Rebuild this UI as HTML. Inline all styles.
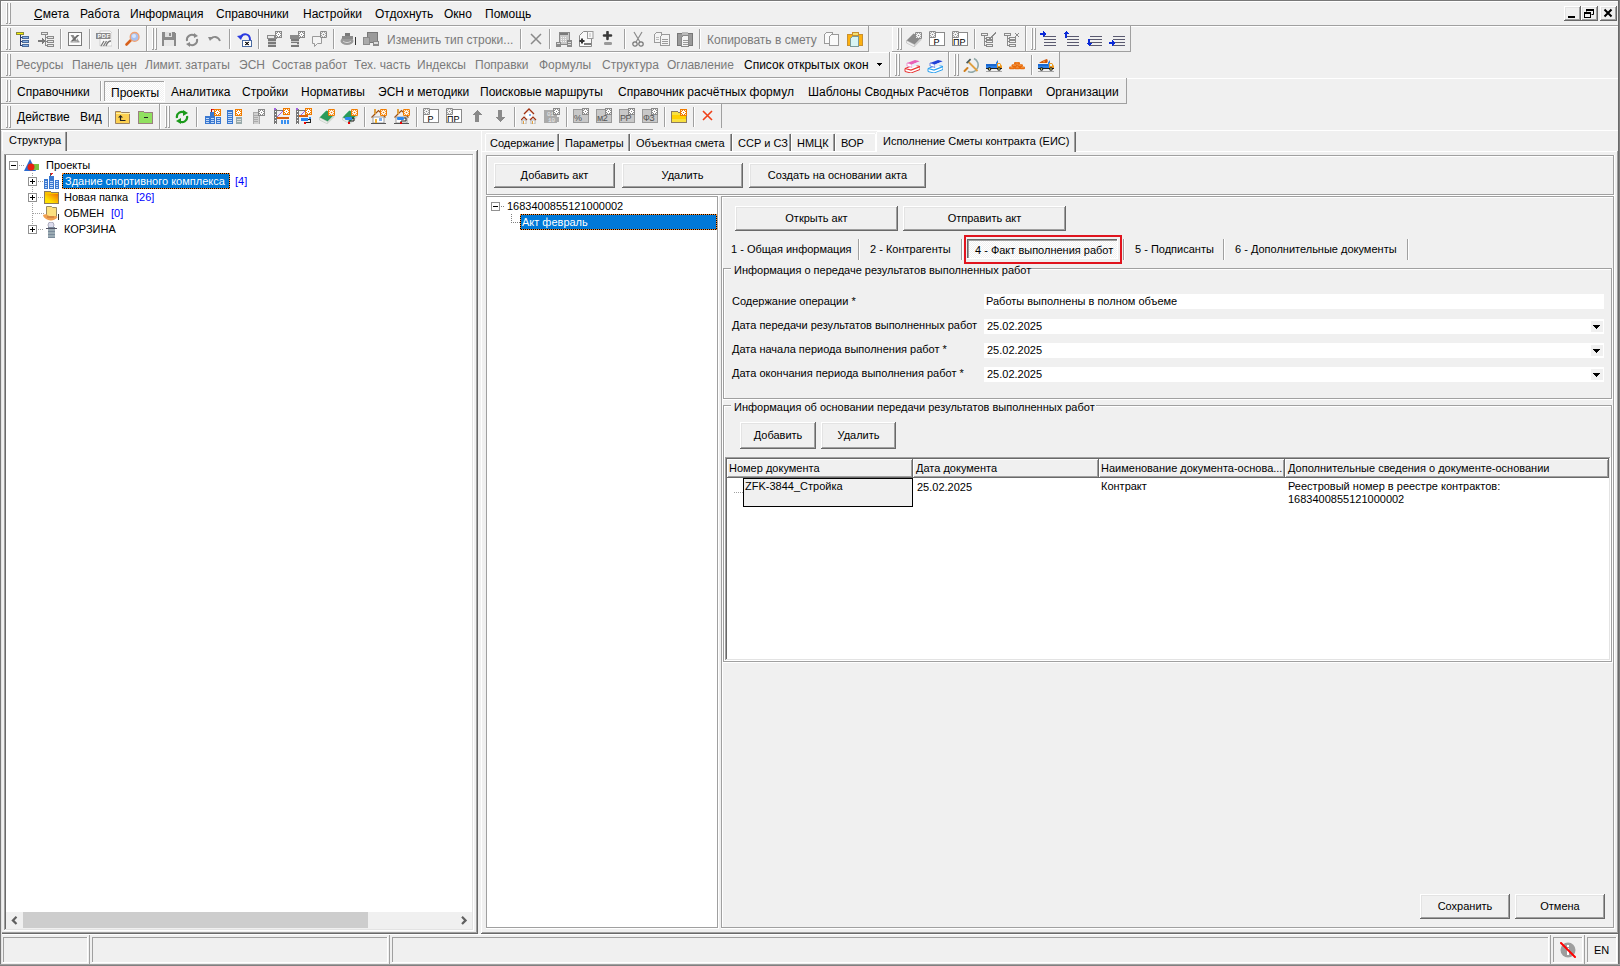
<!DOCTYPE html>
<html><head><meta charset="utf-8"><style>
html,body{margin:0;padding:0;}
body{width:1620px;height:966px;overflow:hidden;background:#f0f0f0;position:relative;font-family:"Liberation Sans",sans-serif;}
body>div{position:absolute;}
.t{font-family:"Liberation Sans",sans-serif;}
svg{position:absolute;}
</style></head><body>
<div style="left:0px;top:0px;width:1620px;height:966px;background:#f0f0f0;"></div>
<div style="left:1px;top:1px;width:1617px;height:1px;background:#ffffff;"></div>
<div style="left:1px;top:1px;width:1px;height:963px;background:#ffffff;"></div>
<div style="left:6px;top:3px;width:1px;height:20px;background:#ffffff;"></div>
<div style="left:7px;top:3px;width:1px;height:21px;background:#a0a0a0;"></div>
<div style="left:9px;top:3px;width:1px;height:20px;background:#ffffff;"></div>
<div style="left:10px;top:3px;width:1px;height:21px;background:#a0a0a0;"></div>
<div style="left:6px;top:23px;width:1px;height:1px;background:#a0a0a0;"></div>
<div style="left:9px;top:23px;width:1px;height:1px;background:#a0a0a0;"></div>
<div class="t" style="left:34px;top:6px;font-size:12px;line-height:16px;color:#000;white-space:nowrap;">Смета</div>
<div class="t" style="left:80px;top:6px;font-size:12px;line-height:16px;color:#000;white-space:nowrap;">Работа</div>
<div class="t" style="left:130px;top:6px;font-size:12px;line-height:16px;color:#000;white-space:nowrap;">Информация</div>
<div class="t" style="left:216px;top:6px;font-size:12px;line-height:16px;color:#000;white-space:nowrap;">Справочники</div>
<div class="t" style="left:303px;top:6px;font-size:12px;line-height:16px;color:#000;white-space:nowrap;">Настройки</div>
<div class="t" style="left:375px;top:6px;font-size:12px;line-height:16px;color:#000;white-space:nowrap;">Отдохнуть</div>
<div class="t" style="left:444px;top:6px;font-size:12px;line-height:16px;color:#000;white-space:nowrap;">Окно</div>
<div class="t" style="left:485px;top:6px;font-size:12px;line-height:16px;color:#000;white-space:nowrap;">Помощь</div>
<div style="left:34px;top:19px;width:8px;height:1px;background:#000;"></div>
<div style="left:1px;top:25px;width:1617px;height:1px;background:#a0a0a0;"></div>
<div style="left:1px;top:26px;width:1617px;height:1px;background:#ffffff;"></div>
<div style="left:1564px;top:6px;width:17px;height:15px;background:#f0f0f0;"></div>
<div style="left:1564px;top:6px;width:17px;height:1px;background:#ffffff;"></div>
<div style="left:1564px;top:6px;width:1px;height:15px;background:#ffffff;"></div>
<div style="left:1564px;top:20px;width:17px;height:1px;background:#696969;"></div>
<div style="left:1580px;top:6px;width:1px;height:15px;background:#696969;"></div>
<div style="left:1565px;top:7px;width:15px;height:1px;background:#e3e3e3;"></div>
<div style="left:1565px;top:7px;width:1px;height:13px;background:#e3e3e3;"></div>
<div style="left:1565px;top:19px;width:15px;height:1px;background:#a0a0a0;"></div>
<div style="left:1579px;top:7px;width:1px;height:13px;background:#a0a0a0;"></div>
<div style="left:1581px;top:6px;width:17px;height:15px;background:#f0f0f0;"></div>
<div style="left:1581px;top:6px;width:17px;height:1px;background:#ffffff;"></div>
<div style="left:1581px;top:6px;width:1px;height:15px;background:#ffffff;"></div>
<div style="left:1581px;top:20px;width:17px;height:1px;background:#696969;"></div>
<div style="left:1597px;top:6px;width:1px;height:15px;background:#696969;"></div>
<div style="left:1582px;top:7px;width:15px;height:1px;background:#e3e3e3;"></div>
<div style="left:1582px;top:7px;width:1px;height:13px;background:#e3e3e3;"></div>
<div style="left:1582px;top:19px;width:15px;height:1px;background:#a0a0a0;"></div>
<div style="left:1596px;top:7px;width:1px;height:13px;background:#a0a0a0;"></div>
<div style="left:1600px;top:6px;width:17px;height:15px;background:#f0f0f0;"></div>
<div style="left:1600px;top:6px;width:17px;height:1px;background:#ffffff;"></div>
<div style="left:1600px;top:6px;width:1px;height:15px;background:#ffffff;"></div>
<div style="left:1600px;top:20px;width:17px;height:1px;background:#696969;"></div>
<div style="left:1616px;top:6px;width:1px;height:15px;background:#696969;"></div>
<div style="left:1601px;top:7px;width:15px;height:1px;background:#e3e3e3;"></div>
<div style="left:1601px;top:7px;width:1px;height:13px;background:#e3e3e3;"></div>
<div style="left:1601px;top:19px;width:15px;height:1px;background:#a0a0a0;"></div>
<div style="left:1615px;top:7px;width:1px;height:13px;background:#a0a0a0;"></div>
<div style="left:1568px;top:16px;width:7px;height:2px;background:#000;"></div>
<svg style="left:1581px;top:6px" width="17" height="15"><path d="M5.5 3.5h7v5h-2 M5.5 3.5v2" fill="none" stroke="#000" stroke-width="1"/><rect x="5" y="3" width="8" height="2" fill="#000"/><rect x="3.5" y="6.5" width="6" height="5" fill="none" stroke="#000"/><rect x="3" y="6" width="7" height="2" fill="#000"/></svg>
<svg style="left:1600px;top:6px" width="17" height="15"><path d="M4.5 3.5l7 7M11.5 3.5l-7 7" stroke="#000" stroke-width="2"/></svg>
<div style="left:1px;top:26px;width:146px;height:1px;background:#ffffff;"></div>
<div style="left:1px;top:26px;width:1px;height:26px;background:#ffffff;"></div>
<div style="left:146px;top:26px;width:1px;height:26px;background:#a0a0a0;"></div>
<div style="left:1px;top:51px;width:146px;height:1px;background:#a0a0a0;"></div>
<div style="left:6px;top:28px;width:1px;height:21px;background:#ffffff;"></div>
<div style="left:7px;top:28px;width:1px;height:22px;background:#a0a0a0;"></div>
<div style="left:9px;top:28px;width:1px;height:21px;background:#ffffff;"></div>
<div style="left:10px;top:28px;width:1px;height:22px;background:#a0a0a0;"></div>
<div style="left:6px;top:49px;width:1px;height:1px;background:#a0a0a0;"></div>
<div style="left:9px;top:49px;width:1px;height:1px;background:#a0a0a0;"></div>
<div style="left:60px;top:29px;width:1px;height:20px;background:#a0a0a0;"></div>
<div style="left:61px;top:29px;width:1px;height:20px;background:#ffffff;"></div>
<div style="left:89px;top:29px;width:1px;height:20px;background:#a0a0a0;"></div>
<div style="left:90px;top:29px;width:1px;height:20px;background:#ffffff;"></div>
<div style="left:118px;top:29px;width:1px;height:20px;background:#a0a0a0;"></div>
<div style="left:119px;top:29px;width:1px;height:20px;background:#ffffff;"></div>
<div style="left:147px;top:26px;width:722px;height:1px;background:#ffffff;"></div>
<div style="left:147px;top:26px;width:1px;height:26px;background:#ffffff;"></div>
<div style="left:868px;top:26px;width:1px;height:26px;background:#a0a0a0;"></div>
<div style="left:147px;top:51px;width:722px;height:1px;background:#a0a0a0;"></div>
<div style="left:152px;top:28px;width:1px;height:21px;background:#ffffff;"></div>
<div style="left:153px;top:28px;width:1px;height:22px;background:#a0a0a0;"></div>
<div style="left:155px;top:28px;width:1px;height:21px;background:#ffffff;"></div>
<div style="left:156px;top:28px;width:1px;height:22px;background:#a0a0a0;"></div>
<div style="left:152px;top:49px;width:1px;height:1px;background:#a0a0a0;"></div>
<div style="left:155px;top:49px;width:1px;height:1px;background:#a0a0a0;"></div>
<div style="left:229px;top:29px;width:1px;height:20px;background:#a0a0a0;"></div>
<div style="left:230px;top:29px;width:1px;height:20px;background:#ffffff;"></div>
<div style="left:258px;top:29px;width:1px;height:20px;background:#a0a0a0;"></div>
<div style="left:259px;top:29px;width:1px;height:20px;background:#ffffff;"></div>
<div style="left:333px;top:29px;width:1px;height:20px;background:#a0a0a0;"></div>
<div style="left:334px;top:29px;width:1px;height:20px;background:#ffffff;"></div>
<div style="left:520px;top:29px;width:1px;height:20px;background:#a0a0a0;"></div>
<div style="left:521px;top:29px;width:1px;height:20px;background:#ffffff;"></div>
<div style="left:549px;top:29px;width:1px;height:20px;background:#a0a0a0;"></div>
<div style="left:550px;top:29px;width:1px;height:20px;background:#ffffff;"></div>
<div style="left:624px;top:29px;width:1px;height:20px;background:#a0a0a0;"></div>
<div style="left:625px;top:29px;width:1px;height:20px;background:#ffffff;"></div>
<div style="left:699px;top:29px;width:1px;height:20px;background:#a0a0a0;"></div>
<div style="left:700px;top:29px;width:1px;height:20px;background:#ffffff;"></div>
<div class="t" style="left:387px;top:32px;font-size:12px;line-height:16px;color:#7a7a7a;white-space:nowrap;">Изменить тип строки...</div>
<div class="t" style="left:707px;top:32px;font-size:12px;line-height:16px;color:#7a7a7a;white-space:nowrap;">Копировать в смету</div>
<div style="left:892px;top:26px;width:134px;height:1px;background:#ffffff;"></div>
<div style="left:892px;top:26px;width:1px;height:26px;background:#ffffff;"></div>
<div style="left:1025px;top:26px;width:1px;height:26px;background:#a0a0a0;"></div>
<div style="left:892px;top:51px;width:134px;height:1px;background:#a0a0a0;"></div>
<div style="left:897px;top:28px;width:1px;height:21px;background:#ffffff;"></div>
<div style="left:898px;top:28px;width:1px;height:22px;background:#a0a0a0;"></div>
<div style="left:900px;top:28px;width:1px;height:21px;background:#ffffff;"></div>
<div style="left:901px;top:28px;width:1px;height:22px;background:#a0a0a0;"></div>
<div style="left:897px;top:49px;width:1px;height:1px;background:#a0a0a0;"></div>
<div style="left:900px;top:49px;width:1px;height:1px;background:#a0a0a0;"></div>
<div style="left:974px;top:29px;width:1px;height:20px;background:#a0a0a0;"></div>
<div style="left:975px;top:29px;width:1px;height:20px;background:#ffffff;"></div>
<div style="left:1026px;top:26px;width:105px;height:1px;background:#ffffff;"></div>
<div style="left:1026px;top:26px;width:1px;height:26px;background:#ffffff;"></div>
<div style="left:1130px;top:26px;width:1px;height:26px;background:#a0a0a0;"></div>
<div style="left:1026px;top:51px;width:105px;height:1px;background:#a0a0a0;"></div>
<div style="left:1031px;top:28px;width:1px;height:21px;background:#ffffff;"></div>
<div style="left:1032px;top:28px;width:1px;height:22px;background:#a0a0a0;"></div>
<div style="left:1034px;top:28px;width:1px;height:21px;background:#ffffff;"></div>
<div style="left:1035px;top:28px;width:1px;height:22px;background:#a0a0a0;"></div>
<div style="left:1031px;top:49px;width:1px;height:1px;background:#a0a0a0;"></div>
<div style="left:1034px;top:49px;width:1px;height:1px;background:#a0a0a0;"></div>
<div style="left:1px;top:52px;width:889px;height:1px;background:#ffffff;"></div>
<div style="left:1px;top:52px;width:1px;height:26px;background:#ffffff;"></div>
<div style="left:889px;top:52px;width:1px;height:26px;background:#a0a0a0;"></div>
<div style="left:1px;top:77px;width:889px;height:1px;background:#a0a0a0;"></div>
<div style="left:6px;top:54px;width:1px;height:21px;background:#ffffff;"></div>
<div style="left:7px;top:54px;width:1px;height:22px;background:#a0a0a0;"></div>
<div style="left:9px;top:54px;width:1px;height:21px;background:#ffffff;"></div>
<div style="left:10px;top:54px;width:1px;height:22px;background:#a0a0a0;"></div>
<div style="left:6px;top:75px;width:1px;height:1px;background:#a0a0a0;"></div>
<div style="left:9px;top:75px;width:1px;height:1px;background:#a0a0a0;"></div>
<div class="t" style="left:16px;top:57px;font-size:12px;line-height:16px;color:#7a7a7a;white-space:nowrap;">Ресурсы</div>
<div class="t" style="left:72px;top:57px;font-size:12px;line-height:16px;color:#7a7a7a;white-space:nowrap;">Панель цен</div>
<div class="t" style="left:145px;top:57px;font-size:12px;line-height:16px;color:#7a7a7a;white-space:nowrap;">Лимит. затраты</div>
<div class="t" style="left:239px;top:57px;font-size:12px;line-height:16px;color:#7a7a7a;white-space:nowrap;">ЭСН</div>
<div class="t" style="left:272px;top:57px;font-size:12px;line-height:16px;color:#7a7a7a;white-space:nowrap;">Состав работ</div>
<div class="t" style="left:354px;top:57px;font-size:12px;line-height:16px;color:#7a7a7a;white-space:nowrap;">Тех. часть</div>
<div class="t" style="left:417px;top:57px;font-size:12px;line-height:16px;color:#7a7a7a;white-space:nowrap;">Индексы</div>
<div class="t" style="left:475px;top:57px;font-size:12px;line-height:16px;color:#7a7a7a;white-space:nowrap;">Поправки</div>
<div class="t" style="left:539px;top:57px;font-size:12px;line-height:16px;color:#7a7a7a;white-space:nowrap;">Формулы</div>
<div class="t" style="left:602px;top:57px;font-size:12px;line-height:16px;color:#7a7a7a;white-space:nowrap;">Структура</div>
<div class="t" style="left:667px;top:57px;font-size:12px;line-height:16px;color:#7a7a7a;white-space:nowrap;">Оглавление</div>
<div class="t" style="left:744px;top:57px;font-size:12px;line-height:16px;color:#000;white-space:nowrap;">Список открытых окон</div>
<div style="left:877px;top:63px;width:5px;height:1px;background:#000;"></div>
<div style="left:878px;top:64px;width:3px;height:1px;background:#000;"></div>
<div style="left:879px;top:65px;width:1px;height:1px;background:#000;"></div>
<div style="left:890px;top:52px;width:59px;height:1px;background:#ffffff;"></div>
<div style="left:890px;top:52px;width:1px;height:26px;background:#ffffff;"></div>
<div style="left:948px;top:52px;width:1px;height:26px;background:#a0a0a0;"></div>
<div style="left:890px;top:77px;width:59px;height:1px;background:#a0a0a0;"></div>
<div style="left:895px;top:54px;width:1px;height:21px;background:#ffffff;"></div>
<div style="left:896px;top:54px;width:1px;height:22px;background:#a0a0a0;"></div>
<div style="left:898px;top:54px;width:1px;height:21px;background:#ffffff;"></div>
<div style="left:899px;top:54px;width:1px;height:22px;background:#a0a0a0;"></div>
<div style="left:895px;top:75px;width:1px;height:1px;background:#a0a0a0;"></div>
<div style="left:898px;top:75px;width:1px;height:1px;background:#a0a0a0;"></div>
<div style="left:949px;top:52px;width:111px;height:1px;background:#ffffff;"></div>
<div style="left:949px;top:52px;width:1px;height:26px;background:#ffffff;"></div>
<div style="left:1059px;top:52px;width:1px;height:26px;background:#a0a0a0;"></div>
<div style="left:949px;top:77px;width:111px;height:1px;background:#a0a0a0;"></div>
<div style="left:954px;top:54px;width:1px;height:21px;background:#ffffff;"></div>
<div style="left:955px;top:54px;width:1px;height:22px;background:#a0a0a0;"></div>
<div style="left:957px;top:54px;width:1px;height:21px;background:#ffffff;"></div>
<div style="left:958px;top:54px;width:1px;height:22px;background:#a0a0a0;"></div>
<div style="left:954px;top:75px;width:1px;height:1px;background:#a0a0a0;"></div>
<div style="left:957px;top:75px;width:1px;height:1px;background:#a0a0a0;"></div>
<div style="left:1031px;top:55px;width:1px;height:20px;background:#a0a0a0;"></div>
<div style="left:1032px;top:55px;width:1px;height:20px;background:#ffffff;"></div>
<div style="left:1060px;top:78px;width:558px;height:1px;background:#ffffff;"></div>
<div style="left:1px;top:78px;width:1126px;height:1px;background:#ffffff;"></div>
<div style="left:1px;top:78px;width:1px;height:26px;background:#ffffff;"></div>
<div style="left:1126px;top:78px;width:1px;height:26px;background:#a0a0a0;"></div>
<div style="left:1px;top:103px;width:1126px;height:1px;background:#a0a0a0;"></div>
<div style="left:6px;top:80px;width:1px;height:21px;background:#ffffff;"></div>
<div style="left:7px;top:80px;width:1px;height:22px;background:#a0a0a0;"></div>
<div style="left:9px;top:80px;width:1px;height:21px;background:#ffffff;"></div>
<div style="left:10px;top:80px;width:1px;height:22px;background:#a0a0a0;"></div>
<div style="left:6px;top:101px;width:1px;height:1px;background:#a0a0a0;"></div>
<div style="left:9px;top:101px;width:1px;height:1px;background:#a0a0a0;"></div>
<div class="t" style="left:17px;top:84px;font-size:12px;line-height:16px;color:#000;white-space:nowrap;">Справочники</div>
<div style="left:100px;top:81px;width:1px;height:20px;background:#a0a0a0;"></div>
<div style="left:101px;top:81px;width:1px;height:20px;background:#ffffff;"></div>
<div style="left:104px;top:81px;width:61px;height:21px;background:repeating-conic-gradient(#ffffff 0 25%, #f0f0f0 0 50%) 0 0/2px 2px;"></div>
<div style="left:104px;top:81px;width:61px;height:1px;background:#a0a0a0;"></div>
<div style="left:104px;top:81px;width:1px;height:21px;background:#a0a0a0;"></div>
<div style="left:104px;top:101px;width:61px;height:1px;background:#ffffff;"></div>
<div style="left:164px;top:81px;width:1px;height:21px;background:#ffffff;"></div>
<div class="t" style="left:111px;top:85px;font-size:12px;line-height:16px;color:#000;white-space:nowrap;">Проекты</div>
<div class="t" style="left:171px;top:84px;font-size:12px;line-height:16px;color:#000;white-space:nowrap;">Аналитика</div>
<div class="t" style="left:242px;top:84px;font-size:12px;line-height:16px;color:#000;white-space:nowrap;">Стройки</div>
<div class="t" style="left:301px;top:84px;font-size:12px;line-height:16px;color:#000;white-space:nowrap;">Нормативы</div>
<div class="t" style="left:378px;top:84px;font-size:12px;line-height:16px;color:#000;white-space:nowrap;">ЭСН и методики</div>
<div class="t" style="left:480px;top:84px;font-size:12px;line-height:16px;color:#000;white-space:nowrap;">Поисковые маршруты</div>
<div class="t" style="left:618px;top:84px;font-size:12px;line-height:16px;color:#000;white-space:nowrap;">Справочник расчётных формул</div>
<div class="t" style="left:808px;top:84px;font-size:12px;line-height:16px;color:#000;white-space:nowrap;">Шаблоны Сводных Расчётов</div>
<div class="t" style="left:979px;top:84px;font-size:12px;line-height:16px;color:#000;white-space:nowrap;">Поправки</div>
<div class="t" style="left:1046px;top:84px;font-size:12px;line-height:16px;color:#000;white-space:nowrap;">Организации</div>
<div style="left:1px;top:104px;width:720px;height:1px;background:#ffffff;"></div>
<div style="left:6px;top:106px;width:1px;height:21px;background:#ffffff;"></div>
<div style="left:7px;top:106px;width:1px;height:22px;background:#a0a0a0;"></div>
<div style="left:9px;top:106px;width:1px;height:21px;background:#ffffff;"></div>
<div style="left:10px;top:106px;width:1px;height:22px;background:#a0a0a0;"></div>
<div style="left:6px;top:127px;width:1px;height:1px;background:#a0a0a0;"></div>
<div style="left:9px;top:127px;width:1px;height:1px;background:#a0a0a0;"></div>
<div class="t" style="left:17px;top:109px;font-size:12px;line-height:16px;color:#000;white-space:nowrap;">Действие</div>
<div class="t" style="left:80px;top:109px;font-size:12px;line-height:16px;color:#000;white-space:nowrap;">Вид</div>
<div style="left:108px;top:107px;width:1px;height:20px;background:#a0a0a0;"></div>
<div style="left:109px;top:107px;width:1px;height:20px;background:#ffffff;"></div>
<div style="left:159px;top:104px;width:1px;height:25px;background:#a0a0a0;"></div>
<div style="left:160px;top:104px;width:1px;height:25px;background:#ffffff;"></div>
<div style="left:165px;top:106px;width:1px;height:21px;background:#ffffff;"></div>
<div style="left:166px;top:106px;width:1px;height:22px;background:#a0a0a0;"></div>
<div style="left:168px;top:106px;width:1px;height:21px;background:#ffffff;"></div>
<div style="left:169px;top:106px;width:1px;height:22px;background:#a0a0a0;"></div>
<div style="left:165px;top:127px;width:1px;height:1px;background:#a0a0a0;"></div>
<div style="left:168px;top:127px;width:1px;height:1px;background:#a0a0a0;"></div>
<div style="left:196px;top:107px;width:1px;height:20px;background:#a0a0a0;"></div>
<div style="left:197px;top:107px;width:1px;height:20px;background:#ffffff;"></div>
<div style="left:364px;top:107px;width:1px;height:20px;background:#a0a0a0;"></div>
<div style="left:365px;top:107px;width:1px;height:20px;background:#ffffff;"></div>
<div style="left:416px;top:107px;width:1px;height:20px;background:#a0a0a0;"></div>
<div style="left:417px;top:107px;width:1px;height:20px;background:#ffffff;"></div>
<div style="left:514px;top:107px;width:1px;height:20px;background:#a0a0a0;"></div>
<div style="left:515px;top:107px;width:1px;height:20px;background:#ffffff;"></div>
<div style="left:566px;top:107px;width:1px;height:20px;background:#a0a0a0;"></div>
<div style="left:567px;top:107px;width:1px;height:20px;background:#ffffff;"></div>
<div style="left:664px;top:107px;width:1px;height:20px;background:#a0a0a0;"></div>
<div style="left:665px;top:107px;width:1px;height:20px;background:#ffffff;"></div>
<div style="left:693px;top:107px;width:1px;height:20px;background:#a0a0a0;"></div>
<div style="left:694px;top:107px;width:1px;height:20px;background:#ffffff;"></div>
<div style="left:721px;top:104px;width:1px;height:24px;background:#a0a0a0;"></div>
<div style="left:1px;top:129px;width:652px;height:1px;background:#a0a0a0;"></div>
<div style="left:1px;top:130px;width:1617px;height:1px;background:#ffffff;"></div>
<div style="left:2px;top:131px;width:63px;height:1px;background:#ffffff;"></div>
<div style="left:2px;top:131px;width:1px;height:20px;background:#ffffff;"></div>
<div style="left:65px;top:132px;width:1px;height:19px;background:#a0a0a0;"></div>
<div style="left:66px;top:132px;width:1px;height:19px;background:#696969;"></div>
<div class="t" style="left:9px;top:133px;font-size:11px;line-height:15px;color:#000;white-space:nowrap;">Структура</div>
<div style="left:67px;top:150px;width:411px;height:1px;background:#ffffff;"></div>
<div style="left:476px;top:151px;width:1px;height:782px;background:#a0a0a0;"></div>
<div style="left:477px;top:150px;width:1px;height:784px;background:#696969;"></div>
<div style="left:2px;top:932px;width:475px;height:1px;background:#a0a0a0;"></div>
<div style="left:1px;top:933px;width:477px;height:1px;background:#696969;"></div>
<div style="left:4px;top:154px;width:470px;height:777px;background:#ffffff;"></div>
<div style="left:4px;top:154px;width:470px;height:1px;background:#a0a0a0;"></div>
<div style="left:4px;top:154px;width:1px;height:777px;background:#a0a0a0;"></div>
<div style="left:5px;top:155px;width:1px;height:775px;background:#696969;"></div>
<div style="left:5px;top:929px;width:468px;height:1px;background:#e3e3e3;"></div>
<div style="left:472px;top:155px;width:1px;height:775px;background:#e3e3e3;"></div>
<div style="left:4px;top:930px;width:470px;height:1px;background:#ffffff;"></div>
<div style="left:473px;top:154px;width:1px;height:777px;background:#ffffff;"></div>
<div style="left:6px;top:912px;width:466px;height:17px;background:#f0f0f0;"></div>
<div style="left:23px;top:912px;width:345px;height:16px;background:#cdcdcd;"></div>
<svg style="left:6px;top:912px" width="16" height="17"><path d="M10.5 4.8l-3.6 3.6 3.6 3.6" fill="none" stroke="#606060" stroke-width="2.2"/></svg>
<svg style="left:456px;top:912px" width="16" height="17"><path d="M6 4.8l3.6 3.6-3.6 3.6" fill="none" stroke="#606060" stroke-width="2.2"/></svg>
<div style="left:9px;top:161px;width:9px;height:9px;background:#ffffff;box-sizing:border-box;border:1px solid #919191;"></div>
<div style="left:11px;top:165px;width:5px;height:1px;background:#000;"></div>
<div style="left:19px;top:165px;width:1px;height:1px;background:#a0a0a0;"></div>
<div style="left:21px;top:165px;width:1px;height:1px;background:#a0a0a0;"></div>
<div style="left:23px;top:165px;width:1px;height:1px;background:#a0a0a0;"></div>
<div class="t" style="left:46px;top:158px;font-size:11px;line-height:15px;color:#000;white-space:nowrap;">Проекты</div>
<div style="left:32px;top:173px;width:1px;height:1px;background:#a0a0a0;"></div>
<div style="left:32px;top:175px;width:1px;height:1px;background:#a0a0a0;"></div>
<div style="left:32px;top:177px;width:1px;height:1px;background:#a0a0a0;"></div>
<div style="left:32px;top:179px;width:1px;height:1px;background:#a0a0a0;"></div>
<div style="left:32px;top:181px;width:1px;height:1px;background:#a0a0a0;"></div>
<div style="left:32px;top:183px;width:1px;height:1px;background:#a0a0a0;"></div>
<div style="left:32px;top:185px;width:1px;height:1px;background:#a0a0a0;"></div>
<div style="left:32px;top:187px;width:1px;height:1px;background:#a0a0a0;"></div>
<div style="left:32px;top:189px;width:1px;height:1px;background:#a0a0a0;"></div>
<div style="left:32px;top:191px;width:1px;height:1px;background:#a0a0a0;"></div>
<div style="left:32px;top:193px;width:1px;height:1px;background:#a0a0a0;"></div>
<div style="left:32px;top:195px;width:1px;height:1px;background:#a0a0a0;"></div>
<div style="left:32px;top:197px;width:1px;height:1px;background:#a0a0a0;"></div>
<div style="left:32px;top:199px;width:1px;height:1px;background:#a0a0a0;"></div>
<div style="left:32px;top:201px;width:1px;height:1px;background:#a0a0a0;"></div>
<div style="left:32px;top:203px;width:1px;height:1px;background:#a0a0a0;"></div>
<div style="left:32px;top:205px;width:1px;height:1px;background:#a0a0a0;"></div>
<div style="left:32px;top:207px;width:1px;height:1px;background:#a0a0a0;"></div>
<div style="left:32px;top:209px;width:1px;height:1px;background:#a0a0a0;"></div>
<div style="left:32px;top:211px;width:1px;height:1px;background:#a0a0a0;"></div>
<div style="left:32px;top:213px;width:1px;height:1px;background:#a0a0a0;"></div>
<div style="left:32px;top:215px;width:1px;height:1px;background:#a0a0a0;"></div>
<div style="left:32px;top:217px;width:1px;height:1px;background:#a0a0a0;"></div>
<div style="left:32px;top:219px;width:1px;height:1px;background:#a0a0a0;"></div>
<div style="left:32px;top:221px;width:1px;height:1px;background:#a0a0a0;"></div>
<div style="left:32px;top:223px;width:1px;height:1px;background:#a0a0a0;"></div>
<div style="left:32px;top:225px;width:1px;height:1px;background:#a0a0a0;"></div>
<div style="left:32px;top:227px;width:1px;height:1px;background:#a0a0a0;"></div>
<div style="left:32px;top:229px;width:1px;height:1px;background:#a0a0a0;"></div>
<div style="left:38px;top:181px;width:1px;height:1px;background:#a0a0a0;"></div>
<div style="left:40px;top:181px;width:1px;height:1px;background:#a0a0a0;"></div>
<div style="left:42px;top:181px;width:1px;height:1px;background:#a0a0a0;"></div>
<div style="left:38px;top:197px;width:1px;height:1px;background:#a0a0a0;"></div>
<div style="left:40px;top:197px;width:1px;height:1px;background:#a0a0a0;"></div>
<div style="left:42px;top:197px;width:1px;height:1px;background:#a0a0a0;"></div>
<div style="left:38px;top:229px;width:1px;height:1px;background:#a0a0a0;"></div>
<div style="left:40px;top:229px;width:1px;height:1px;background:#a0a0a0;"></div>
<div style="left:42px;top:229px;width:1px;height:1px;background:#a0a0a0;"></div>
<div style="left:33px;top:213px;width:1px;height:1px;background:#a0a0a0;"></div>
<div style="left:35px;top:213px;width:1px;height:1px;background:#a0a0a0;"></div>
<div style="left:37px;top:213px;width:1px;height:1px;background:#a0a0a0;"></div>
<div style="left:39px;top:213px;width:1px;height:1px;background:#a0a0a0;"></div>
<div style="left:41px;top:213px;width:1px;height:1px;background:#a0a0a0;"></div>
<div style="left:43px;top:213px;width:1px;height:1px;background:#a0a0a0;"></div>
<div style="left:62px;top:173px;width:168px;height:16px;background:#000;"></div>
<div style="left:62px;top:173px;width:168px;height:16px;background:#0078d7;box-sizing:border-box;border:1px dotted #ff8c28;background-clip:padding-box;"></div>
<div class="t" style="left:65px;top:174px;font-size:11px;line-height:15px;color:#fff;white-space:nowrap;">Здание спортивного комплекса</div>
<div class="t" style="left:235px;top:174px;font-size:11px;line-height:15px;color:#0000ff;white-space:nowrap;">[4]</div>
<div class="t" style="left:64px;top:190px;font-size:11px;line-height:15px;color:#000;white-space:nowrap;">Новая папка</div>
<div class="t" style="left:136px;top:190px;font-size:11px;line-height:15px;color:#0000ff;white-space:nowrap;">[26]</div>
<div class="t" style="left:64px;top:206px;font-size:11px;line-height:15px;color:#000;white-space:nowrap;">ОБМЕН</div>
<div class="t" style="left:111px;top:206px;font-size:11px;line-height:15px;color:#0000ff;white-space:nowrap;">[0]</div>
<div class="t" style="left:64px;top:222px;font-size:11px;line-height:15px;color:#000;white-space:nowrap;">КОРЗИНА</div>
<div style="left:28px;top:177px;width:9px;height:9px;background:#ffffff;box-sizing:border-box;border:1px solid #919191;"></div>
<div style="left:30px;top:181px;width:5px;height:1px;background:#000;"></div>
<div style="left:32px;top:179px;width:1px;height:5px;background:#000;"></div>
<div style="left:28px;top:193px;width:9px;height:9px;background:#ffffff;box-sizing:border-box;border:1px solid #919191;"></div>
<div style="left:30px;top:197px;width:5px;height:1px;background:#000;"></div>
<div style="left:32px;top:195px;width:1px;height:5px;background:#000;"></div>
<div style="left:28px;top:225px;width:9px;height:9px;background:#ffffff;box-sizing:border-box;border:1px solid #919191;"></div>
<div style="left:30px;top:229px;width:5px;height:1px;background:#000;"></div>
<div style="left:32px;top:227px;width:1px;height:5px;background:#000;"></div>
<div style="left:481px;top:130px;width:1px;height:804px;background:#ffffff;"></div>
<div style="left:486px;top:133px;width:72px;height:1px;background:#ffffff;"></div>
<div style="left:485px;top:134px;width:1px;height:17px;background:#ffffff;"></div>
<div style="left:557px;top:134px;width:1px;height:17px;background:#a0a0a0;"></div>
<div style="left:558px;top:134px;width:1px;height:17px;background:#696969;"></div>
<div class="t" style="left:490px;top:136px;font-size:11px;line-height:15px;color:#000;white-space:nowrap;">Содержание</div>
<div style="left:560px;top:133px;width:69px;height:1px;background:#ffffff;"></div>
<div style="left:559px;top:134px;width:1px;height:17px;background:#ffffff;"></div>
<div style="left:628px;top:134px;width:1px;height:17px;background:#a0a0a0;"></div>
<div style="left:629px;top:134px;width:1px;height:17px;background:#696969;"></div>
<div class="t" style="left:565px;top:136px;font-size:11px;line-height:15px;color:#000;white-space:nowrap;">Параметры</div>
<div style="left:631px;top:133px;width:100px;height:1px;background:#ffffff;"></div>
<div style="left:630px;top:134px;width:1px;height:17px;background:#ffffff;"></div>
<div style="left:730px;top:134px;width:1px;height:17px;background:#a0a0a0;"></div>
<div style="left:731px;top:134px;width:1px;height:17px;background:#696969;"></div>
<div class="t" style="left:636px;top:136px;font-size:11px;line-height:15px;color:#000;white-space:nowrap;">Объектная смета</div>
<div style="left:733px;top:133px;width:57px;height:1px;background:#ffffff;"></div>
<div style="left:732px;top:134px;width:1px;height:17px;background:#ffffff;"></div>
<div style="left:789px;top:134px;width:1px;height:17px;background:#a0a0a0;"></div>
<div style="left:790px;top:134px;width:1px;height:17px;background:#696969;"></div>
<div class="t" style="left:738px;top:136px;font-size:11px;line-height:15px;color:#000;white-space:nowrap;">ССР и СЗ</div>
<div style="left:792px;top:133px;width:42px;height:1px;background:#ffffff;"></div>
<div style="left:791px;top:134px;width:1px;height:17px;background:#ffffff;"></div>
<div style="left:833px;top:134px;width:1px;height:17px;background:#a0a0a0;"></div>
<div style="left:834px;top:134px;width:1px;height:17px;background:#696969;"></div>
<div class="t" style="left:797px;top:136px;font-size:11px;line-height:15px;color:#000;white-space:nowrap;">НМЦК</div>
<div style="left:836px;top:133px;width:39px;height:1px;background:#ffffff;"></div>
<div style="left:835px;top:134px;width:1px;height:17px;background:#ffffff;"></div>
<div class="t" style="left:841px;top:136px;font-size:11px;line-height:15px;color:#000;white-space:nowrap;">ВОР</div>
<div style="left:875px;top:134px;width:1px;height:17px;background:#ffffff;"></div>
<div style="left:877px;top:131px;width:197px;height:1px;background:#ffffff;"></div>
<div style="left:876px;top:132px;width:1px;height:20px;background:#ffffff;"></div>
<div style="left:1074px;top:132px;width:1px;height:20px;background:#a0a0a0;"></div>
<div style="left:1075px;top:132px;width:1px;height:20px;background:#696969;"></div>
<div class="t" style="left:883px;top:134px;font-size:11px;line-height:15px;color:#000;white-space:nowrap;">Исполнение Сметы контракта (ЕИС)</div>
<div style="left:482px;top:151px;width:394px;height:1px;background:#ffffff;"></div>
<div style="left:1076px;top:151px;width:542px;height:1px;background:#ffffff;"></div>
<div style="left:1617px;top:151px;width:1px;height:782px;background:#696969;"></div>
<div style="left:482px;top:932px;width:1136px;height:1px;background:#a0a0a0;"></div>
<div style="left:481px;top:933px;width:1137px;height:1px;background:#696969;"></div>
<div style="left:486px;top:155px;width:1129px;height:1px;background:#a0a0a0;"></div>
<div style="left:486px;top:155px;width:1px;height:41px;background:#a0a0a0;"></div>
<div style="left:486px;top:195px;width:1129px;height:1px;background:#ffffff;"></div>
<div style="left:1614px;top:155px;width:1px;height:41px;background:#ffffff;"></div>
<div style="left:487px;top:156px;width:1127px;height:1px;background:#ffffff;"></div>
<div style="left:487px;top:156px;width:1px;height:39px;background:#ffffff;"></div>
<div style="left:487px;top:194px;width:1127px;height:1px;background:#a0a0a0;"></div>
<div style="left:1613px;top:156px;width:1px;height:39px;background:#a0a0a0;"></div>
<div style="left:494px;top:163px;width:121px;height:25px;background:#f0f0f0;"></div>
<div style="left:494px;top:163px;width:121px;height:1px;background:#ffffff;"></div>
<div style="left:494px;top:163px;width:1px;height:25px;background:#ffffff;"></div>
<div style="left:494px;top:187px;width:121px;height:1px;background:#696969;"></div>
<div style="left:614px;top:163px;width:1px;height:25px;background:#696969;"></div>
<div style="left:495px;top:164px;width:119px;height:1px;background:#e3e3e3;"></div>
<div style="left:495px;top:164px;width:1px;height:23px;background:#e3e3e3;"></div>
<div style="left:495px;top:186px;width:119px;height:1px;background:#a0a0a0;"></div>
<div style="left:613px;top:164px;width:1px;height:23px;background:#a0a0a0;"></div>
<div class="t" style="left:494px;width:121px;text-align:center;top:168px;font-size:11px;line-height:15px;">Добавить акт</div>
<div style="left:622px;top:163px;width:121px;height:25px;background:#f0f0f0;"></div>
<div style="left:622px;top:163px;width:121px;height:1px;background:#ffffff;"></div>
<div style="left:622px;top:163px;width:1px;height:25px;background:#ffffff;"></div>
<div style="left:622px;top:187px;width:121px;height:1px;background:#696969;"></div>
<div style="left:742px;top:163px;width:1px;height:25px;background:#696969;"></div>
<div style="left:623px;top:164px;width:119px;height:1px;background:#e3e3e3;"></div>
<div style="left:623px;top:164px;width:1px;height:23px;background:#e3e3e3;"></div>
<div style="left:623px;top:186px;width:119px;height:1px;background:#a0a0a0;"></div>
<div style="left:741px;top:164px;width:1px;height:23px;background:#a0a0a0;"></div>
<div class="t" style="left:622px;width:121px;text-align:center;top:168px;font-size:11px;line-height:15px;">Удалить</div>
<div style="left:749px;top:163px;width:177px;height:25px;background:#f0f0f0;"></div>
<div style="left:749px;top:163px;width:177px;height:1px;background:#ffffff;"></div>
<div style="left:749px;top:163px;width:1px;height:25px;background:#ffffff;"></div>
<div style="left:749px;top:187px;width:177px;height:1px;background:#696969;"></div>
<div style="left:925px;top:163px;width:1px;height:25px;background:#696969;"></div>
<div style="left:750px;top:164px;width:175px;height:1px;background:#e3e3e3;"></div>
<div style="left:750px;top:164px;width:1px;height:23px;background:#e3e3e3;"></div>
<div style="left:750px;top:186px;width:175px;height:1px;background:#a0a0a0;"></div>
<div style="left:924px;top:164px;width:1px;height:23px;background:#a0a0a0;"></div>
<div class="t" style="left:749px;width:177px;text-align:center;top:168px;font-size:11px;line-height:15px;">Создать на основании акта</div>
<div style="left:486px;top:196px;width:233px;height:1px;background:#a0a0a0;"></div>
<div style="left:486px;top:196px;width:1px;height:733px;background:#a0a0a0;"></div>
<div style="left:486px;top:928px;width:233px;height:1px;background:#ffffff;"></div>
<div style="left:718px;top:196px;width:1px;height:733px;background:#ffffff;"></div>
<div style="left:487px;top:197px;width:231px;height:1px;background:#ffffff;"></div>
<div style="left:487px;top:197px;width:1px;height:731px;background:#ffffff;"></div>
<div style="left:487px;top:927px;width:231px;height:1px;background:#a0a0a0;"></div>
<div style="left:717px;top:197px;width:1px;height:731px;background:#a0a0a0;"></div>
<div style="left:487px;top:197px;width:230px;height:730px;background:#ffffff;"></div>
<div style="left:491px;top:202px;width:9px;height:9px;background:#ffffff;box-sizing:border-box;border:1px solid #919191;"></div>
<div style="left:493px;top:206px;width:5px;height:1px;background:#000;"></div>
<div style="left:501px;top:206px;width:1px;height:1px;background:#808080;"></div>
<div style="left:503px;top:206px;width:1px;height:1px;background:#808080;"></div>
<div class="t" style="left:507px;top:199px;font-size:11px;line-height:15px;color:#000;white-space:nowrap;">1683400855121000002</div>
<div style="left:511px;top:214px;width:1px;height:1px;background:#808080;"></div>
<div style="left:511px;top:216px;width:1px;height:1px;background:#808080;"></div>
<div style="left:511px;top:218px;width:1px;height:1px;background:#808080;"></div>
<div style="left:511px;top:220px;width:1px;height:1px;background:#808080;"></div>
<div style="left:511px;top:222px;width:1px;height:1px;background:#808080;"></div>
<div style="left:513px;top:222px;width:1px;height:1px;background:#808080;"></div>
<div style="left:515px;top:222px;width:1px;height:1px;background:#808080;"></div>
<div style="left:517px;top:222px;width:1px;height:1px;background:#808080;"></div>
<div style="left:519px;top:222px;width:1px;height:1px;background:#808080;"></div>
<div style="left:520px;top:214px;width:197px;height:16px;background:#000;"></div>
<div style="left:520px;top:214px;width:197px;height:16px;background:#0078d7;box-sizing:border-box;border:1px dotted #ff8c28;background-clip:padding-box;"></div>
<div class="t" style="left:522px;top:215px;font-size:11px;line-height:15px;color:#fff;white-space:nowrap;">Акт февраль</div>
<div style="left:721px;top:196px;width:894px;height:1px;background:#a0a0a0;"></div>
<div style="left:721px;top:196px;width:1px;height:733px;background:#a0a0a0;"></div>
<div style="left:721px;top:928px;width:894px;height:1px;background:#ffffff;"></div>
<div style="left:1614px;top:196px;width:1px;height:733px;background:#ffffff;"></div>
<div style="left:722px;top:197px;width:892px;height:1px;background:#ffffff;"></div>
<div style="left:722px;top:197px;width:1px;height:731px;background:#ffffff;"></div>
<div style="left:722px;top:927px;width:892px;height:1px;background:#a0a0a0;"></div>
<div style="left:1613px;top:197px;width:1px;height:731px;background:#a0a0a0;"></div>
<div style="left:735px;top:206px;width:163px;height:25px;background:#f0f0f0;"></div>
<div style="left:735px;top:206px;width:163px;height:1px;background:#ffffff;"></div>
<div style="left:735px;top:206px;width:1px;height:25px;background:#ffffff;"></div>
<div style="left:735px;top:230px;width:163px;height:1px;background:#696969;"></div>
<div style="left:897px;top:206px;width:1px;height:25px;background:#696969;"></div>
<div style="left:736px;top:207px;width:161px;height:1px;background:#e3e3e3;"></div>
<div style="left:736px;top:207px;width:1px;height:23px;background:#e3e3e3;"></div>
<div style="left:736px;top:229px;width:161px;height:1px;background:#a0a0a0;"></div>
<div style="left:896px;top:207px;width:1px;height:23px;background:#a0a0a0;"></div>
<div class="t" style="left:735px;width:163px;text-align:center;top:211px;font-size:11px;line-height:15px;">Открыть акт</div>
<div style="left:903px;top:206px;width:163px;height:25px;background:#f0f0f0;"></div>
<div style="left:903px;top:206px;width:163px;height:1px;background:#ffffff;"></div>
<div style="left:903px;top:206px;width:1px;height:25px;background:#ffffff;"></div>
<div style="left:903px;top:230px;width:163px;height:1px;background:#696969;"></div>
<div style="left:1065px;top:206px;width:1px;height:25px;background:#696969;"></div>
<div style="left:904px;top:207px;width:161px;height:1px;background:#e3e3e3;"></div>
<div style="left:904px;top:207px;width:1px;height:23px;background:#e3e3e3;"></div>
<div style="left:904px;top:229px;width:161px;height:1px;background:#a0a0a0;"></div>
<div style="left:1064px;top:207px;width:1px;height:23px;background:#a0a0a0;"></div>
<div class="t" style="left:903px;width:163px;text-align:center;top:211px;font-size:11px;line-height:15px;">Отправить акт</div>
<div class="t" style="left:731px;top:242px;font-size:11px;line-height:15px;color:#000;white-space:nowrap;">1 - Общая информация</div>
<div style="left:858px;top:239px;width:1px;height:21px;background:#a0a0a0;"></div>
<div style="left:859px;top:239px;width:1px;height:21px;background:#ffffff;"></div>
<div class="t" style="left:870px;top:242px;font-size:11px;line-height:15px;color:#000;white-space:nowrap;">2 - Контрагенты</div>
<div style="left:961px;top:239px;width:1px;height:21px;background:#a0a0a0;"></div>
<div style="left:962px;top:239px;width:1px;height:21px;background:#ffffff;"></div>
<div style="left:964px;top:235px;width:158px;height:29px;background:transparent;box-sizing:border-box;border:2px solid #e0141e;"></div>
<div style="left:967px;top:239px;width:151px;height:20px;background:repeating-conic-gradient(#ffffff 0 25%, #f0f0f0 0 50%) 0 0/2px 2px;"></div>
<div style="left:967px;top:239px;width:151px;height:1px;background:#696969;"></div>
<div style="left:967px;top:239px;width:1px;height:20px;background:#696969;"></div>
<div style="left:968px;top:240px;width:149px;height:1px;background:#a0a0a0;"></div>
<div style="left:968px;top:240px;width:1px;height:18px;background:#a0a0a0;"></div>
<div style="left:967px;top:258px;width:151px;height:1px;background:#ffffff;"></div>
<div style="left:1117px;top:239px;width:1px;height:20px;background:#ffffff;"></div>
<div class="t" style="left:975px;top:243px;font-size:11px;line-height:15px;color:#000;white-space:nowrap;">4 - Факт выполнения работ</div>
<div style="left:1123px;top:239px;width:1px;height:21px;background:#a0a0a0;"></div>
<div style="left:1124px;top:239px;width:1px;height:21px;background:#ffffff;"></div>
<div class="t" style="left:1135px;top:242px;font-size:11px;line-height:15px;color:#000;white-space:nowrap;">5 - Подписанты</div>
<div style="left:1223px;top:239px;width:1px;height:21px;background:#a0a0a0;"></div>
<div style="left:1224px;top:239px;width:1px;height:21px;background:#ffffff;"></div>
<div class="t" style="left:1235px;top:242px;font-size:11px;line-height:15px;color:#000;white-space:nowrap;">6 - Дополнительные документы</div>
<div style="left:1407px;top:239px;width:1px;height:21px;background:#a0a0a0;"></div>
<div style="left:1408px;top:239px;width:1px;height:21px;background:#ffffff;"></div>
<div style="left:723px;top:268px;width:890px;height:1px;background:#a0a0a0;"></div>
<div style="left:723px;top:268px;width:1px;height:132px;background:#a0a0a0;"></div>
<div style="left:723px;top:399px;width:890px;height:1px;background:#ffffff;"></div>
<div style="left:1612px;top:268px;width:1px;height:132px;background:#ffffff;"></div>
<div style="left:724px;top:269px;width:888px;height:1px;background:#ffffff;"></div>
<div style="left:724px;top:269px;width:1px;height:130px;background:#ffffff;"></div>
<div style="left:724px;top:398px;width:888px;height:1px;background:#a0a0a0;"></div>
<div style="left:1611px;top:269px;width:1px;height:130px;background:#a0a0a0;"></div>
<div style="left:731px;top:266px;width:300px;height:5px;background:#f0f0f0;"></div>
<div class="t" style="left:734px;top:263px;font-size:11px;line-height:15px;color:#000;white-space:nowrap;">Информация о передаче результатов выполненных работ</div>
<div class="t" style="left:732px;top:294px;font-size:11px;line-height:15px;color:#000;white-space:nowrap;">Содержание операции *</div>
<div class="t" style="left:732px;top:318px;font-size:11px;line-height:15px;color:#000;white-space:nowrap;">Дата передачи результатов выполненных работ</div>
<div class="t" style="left:732px;top:342px;font-size:11px;line-height:15px;color:#000;white-space:nowrap;">Дата начала периода выполнения работ *</div>
<div class="t" style="left:732px;top:366px;font-size:11px;line-height:15px;color:#000;white-space:nowrap;">Дата окончания периода выполнения работ *</div>
<div style="left:984px;top:294px;width:620px;height:15px;background:#ffffff;"></div>
<div class="t" style="left:986px;top:294px;font-size:11px;line-height:15px;color:#000;white-space:nowrap;">Работы выполнены в полном объеме</div>
<div style="left:984px;top:319px;width:620px;height:15px;background:#ffffff;"></div>
<div class="t" style="left:987px;top:319px;font-size:11px;line-height:15px;color:#000;white-space:nowrap;">25.02.2025</div>
<div style="left:1590px;top:320px;width:14px;height:13px;background:#f0f0f0;box-sizing:border-box;border:1px solid #fff;"></div>
<div style="left:1593px;top:325px;width:7px;height:1px;background:#000;"></div>
<div style="left:1594px;top:326px;width:5px;height:1px;background:#000;"></div>
<div style="left:1595px;top:327px;width:3px;height:1px;background:#000;"></div>
<div style="left:1596px;top:328px;width:1px;height:1px;background:#000;"></div>
<div style="left:984px;top:343px;width:620px;height:15px;background:#ffffff;"></div>
<div class="t" style="left:987px;top:343px;font-size:11px;line-height:15px;color:#000;white-space:nowrap;">25.02.2025</div>
<div style="left:1590px;top:344px;width:14px;height:13px;background:#f0f0f0;box-sizing:border-box;border:1px solid #fff;"></div>
<div style="left:1593px;top:349px;width:7px;height:1px;background:#000;"></div>
<div style="left:1594px;top:350px;width:5px;height:1px;background:#000;"></div>
<div style="left:1595px;top:351px;width:3px;height:1px;background:#000;"></div>
<div style="left:1596px;top:352px;width:1px;height:1px;background:#000;"></div>
<div style="left:984px;top:367px;width:620px;height:15px;background:#ffffff;"></div>
<div class="t" style="left:987px;top:367px;font-size:11px;line-height:15px;color:#000;white-space:nowrap;">25.02.2025</div>
<div style="left:1590px;top:368px;width:14px;height:13px;background:#f0f0f0;box-sizing:border-box;border:1px solid #fff;"></div>
<div style="left:1593px;top:373px;width:7px;height:1px;background:#000;"></div>
<div style="left:1594px;top:374px;width:5px;height:1px;background:#000;"></div>
<div style="left:1595px;top:375px;width:3px;height:1px;background:#000;"></div>
<div style="left:1596px;top:376px;width:1px;height:1px;background:#000;"></div>
<div style="left:723px;top:405px;width:890px;height:1px;background:#a0a0a0;"></div>
<div style="left:723px;top:405px;width:1px;height:258px;background:#a0a0a0;"></div>
<div style="left:723px;top:662px;width:890px;height:1px;background:#ffffff;"></div>
<div style="left:1612px;top:405px;width:1px;height:258px;background:#ffffff;"></div>
<div style="left:724px;top:406px;width:888px;height:1px;background:#ffffff;"></div>
<div style="left:724px;top:406px;width:1px;height:256px;background:#ffffff;"></div>
<div style="left:724px;top:661px;width:888px;height:1px;background:#a0a0a0;"></div>
<div style="left:1611px;top:406px;width:1px;height:256px;background:#a0a0a0;"></div>
<div style="left:731px;top:403px;width:365px;height:5px;background:#f0f0f0;"></div>
<div class="t" style="left:734px;top:400px;font-size:11px;line-height:15px;color:#000;white-space:nowrap;">Информация об основании передачи результатов выполненных работ</div>
<div style="left:740px;top:422px;width:76px;height:27px;background:#f0f0f0;"></div>
<div style="left:740px;top:422px;width:76px;height:1px;background:#ffffff;"></div>
<div style="left:740px;top:422px;width:1px;height:27px;background:#ffffff;"></div>
<div style="left:740px;top:448px;width:76px;height:1px;background:#696969;"></div>
<div style="left:815px;top:422px;width:1px;height:27px;background:#696969;"></div>
<div style="left:741px;top:423px;width:74px;height:1px;background:#e3e3e3;"></div>
<div style="left:741px;top:423px;width:1px;height:25px;background:#e3e3e3;"></div>
<div style="left:741px;top:447px;width:74px;height:1px;background:#a0a0a0;"></div>
<div style="left:814px;top:423px;width:1px;height:25px;background:#a0a0a0;"></div>
<div class="t" style="left:740px;width:76px;text-align:center;top:428px;font-size:11px;line-height:15px;">Добавить</div>
<div style="left:821px;top:422px;width:75px;height:27px;background:#f0f0f0;"></div>
<div style="left:821px;top:422px;width:75px;height:1px;background:#ffffff;"></div>
<div style="left:821px;top:422px;width:1px;height:27px;background:#ffffff;"></div>
<div style="left:821px;top:448px;width:75px;height:1px;background:#696969;"></div>
<div style="left:895px;top:422px;width:1px;height:27px;background:#696969;"></div>
<div style="left:822px;top:423px;width:73px;height:1px;background:#e3e3e3;"></div>
<div style="left:822px;top:423px;width:1px;height:25px;background:#e3e3e3;"></div>
<div style="left:822px;top:447px;width:73px;height:1px;background:#a0a0a0;"></div>
<div style="left:894px;top:423px;width:1px;height:25px;background:#a0a0a0;"></div>
<div class="t" style="left:821px;width:75px;text-align:center;top:428px;font-size:11px;line-height:15px;">Удалить</div>
<div style="left:725px;top:457px;width:886px;height:204px;background:#ffffff;"></div>
<div style="left:725px;top:457px;width:886px;height:1px;background:#a0a0a0;"></div>
<div style="left:725px;top:457px;width:1px;height:204px;background:#a0a0a0;"></div>
<div style="left:726px;top:458px;width:884px;height:1px;background:#696969;"></div>
<div style="left:726px;top:458px;width:1px;height:202px;background:#696969;"></div>
<div style="left:726px;top:659px;width:884px;height:1px;background:#e3e3e3;"></div>
<div style="left:1609px;top:458px;width:1px;height:202px;background:#e3e3e3;"></div>
<div style="left:725px;top:660px;width:886px;height:1px;background:#ffffff;"></div>
<div style="left:1610px;top:457px;width:1px;height:204px;background:#ffffff;"></div>
<div style="left:727px;top:459px;width:186px;height:19px;background:#f0f0f0;"></div>
<div style="left:727px;top:459px;width:186px;height:1px;background:#ffffff;"></div>
<div style="left:727px;top:459px;width:1px;height:19px;background:#ffffff;"></div>
<div style="left:728px;top:476px;width:184px;height:1px;background:#a0a0a0;"></div>
<div style="left:911px;top:460px;width:1px;height:17px;background:#a0a0a0;"></div>
<div style="left:727px;top:477px;width:186px;height:1px;background:#696969;"></div>
<div style="left:912px;top:459px;width:1px;height:19px;background:#696969;"></div>
<div style="left:913px;top:459px;width:186px;height:19px;background:#f0f0f0;"></div>
<div style="left:913px;top:459px;width:186px;height:1px;background:#ffffff;"></div>
<div style="left:913px;top:459px;width:1px;height:19px;background:#ffffff;"></div>
<div style="left:914px;top:476px;width:184px;height:1px;background:#a0a0a0;"></div>
<div style="left:1097px;top:460px;width:1px;height:17px;background:#a0a0a0;"></div>
<div style="left:913px;top:477px;width:186px;height:1px;background:#696969;"></div>
<div style="left:1098px;top:459px;width:1px;height:19px;background:#696969;"></div>
<div style="left:1099px;top:459px;width:186px;height:19px;background:#f0f0f0;"></div>
<div style="left:1099px;top:459px;width:186px;height:1px;background:#ffffff;"></div>
<div style="left:1099px;top:459px;width:1px;height:19px;background:#ffffff;"></div>
<div style="left:1100px;top:476px;width:184px;height:1px;background:#a0a0a0;"></div>
<div style="left:1283px;top:460px;width:1px;height:17px;background:#a0a0a0;"></div>
<div style="left:1099px;top:477px;width:186px;height:1px;background:#696969;"></div>
<div style="left:1284px;top:459px;width:1px;height:19px;background:#696969;"></div>
<div style="left:1285px;top:459px;width:324px;height:19px;background:#f0f0f0;"></div>
<div style="left:1285px;top:459px;width:324px;height:1px;background:#ffffff;"></div>
<div style="left:1285px;top:459px;width:1px;height:19px;background:#ffffff;"></div>
<div style="left:1286px;top:476px;width:322px;height:1px;background:#a0a0a0;"></div>
<div style="left:1607px;top:460px;width:1px;height:17px;background:#a0a0a0;"></div>
<div style="left:1285px;top:477px;width:324px;height:1px;background:#696969;"></div>
<div style="left:1608px;top:459px;width:1px;height:19px;background:#696969;"></div>
<div class="t" style="left:729px;top:461px;font-size:11px;line-height:15px;color:#000;white-space:nowrap;">Номер документа</div>
<div class="t" style="left:916px;top:461px;font-size:11px;line-height:15px;color:#000;white-space:nowrap;">Дата документа</div>
<div class="t" style="left:1101px;top:461px;font-size:11px;line-height:15px;color:#000;white-space:nowrap;">Наименование документа-основа...</div>
<div class="t" style="left:1288px;top:461px;font-size:11px;line-height:15px;color:#000;white-space:nowrap;">Дополнительные сведения о документе-основании</div>
<div style="left:734px;top:492px;width:1px;height:1px;background:#a0a0a0;"></div>
<div style="left:736px;top:492px;width:1px;height:1px;background:#a0a0a0;"></div>
<div style="left:738px;top:492px;width:1px;height:1px;background:#a0a0a0;"></div>
<div style="left:740px;top:492px;width:1px;height:1px;background:#a0a0a0;"></div>
<div style="left:742px;top:492px;width:1px;height:1px;background:#a0a0a0;"></div>
<div style="left:743px;top:478px;width:170px;height:29px;background:#f0f0f0;box-sizing:border-box;border:1px solid #000;"></div>
<div class="t" style="left:745px;top:479px;font-size:11px;line-height:15px;color:#000;white-space:nowrap;">ZFK-3844_Стройка</div>
<div class="t" style="left:917px;top:480px;font-size:11px;line-height:15px;color:#000;white-space:nowrap;">25.02.2025</div>
<div class="t" style="left:1101px;top:479px;font-size:11px;line-height:15px;color:#000;white-space:nowrap;">Контракт</div>
<div class="t" style="left:1288px;top:479px;font-size:11px;line-height:15px;color:#000;white-space:nowrap;">Реестровый номер в реестре контрактов:</div>
<div class="t" style="left:1288px;top:492px;font-size:11px;line-height:15px;color:#000;white-space:nowrap;">1683400855121000002</div>
<div style="left:1420px;top:894px;width:90px;height:25px;background:#f0f0f0;"></div>
<div style="left:1420px;top:894px;width:90px;height:1px;background:#ffffff;"></div>
<div style="left:1420px;top:894px;width:1px;height:25px;background:#ffffff;"></div>
<div style="left:1420px;top:918px;width:90px;height:1px;background:#696969;"></div>
<div style="left:1509px;top:894px;width:1px;height:25px;background:#696969;"></div>
<div style="left:1421px;top:895px;width:88px;height:1px;background:#e3e3e3;"></div>
<div style="left:1421px;top:895px;width:1px;height:23px;background:#e3e3e3;"></div>
<div style="left:1421px;top:917px;width:88px;height:1px;background:#a0a0a0;"></div>
<div style="left:1508px;top:895px;width:1px;height:23px;background:#a0a0a0;"></div>
<div class="t" style="left:1420px;width:90px;text-align:center;top:899px;font-size:11px;line-height:15px;">Сохранить</div>
<div style="left:1515px;top:894px;width:90px;height:25px;background:#f0f0f0;"></div>
<div style="left:1515px;top:894px;width:90px;height:1px;background:#ffffff;"></div>
<div style="left:1515px;top:894px;width:1px;height:25px;background:#ffffff;"></div>
<div style="left:1515px;top:918px;width:90px;height:1px;background:#696969;"></div>
<div style="left:1604px;top:894px;width:1px;height:25px;background:#696969;"></div>
<div style="left:1516px;top:895px;width:88px;height:1px;background:#e3e3e3;"></div>
<div style="left:1516px;top:895px;width:1px;height:23px;background:#e3e3e3;"></div>
<div style="left:1516px;top:917px;width:88px;height:1px;background:#a0a0a0;"></div>
<div style="left:1603px;top:895px;width:1px;height:23px;background:#a0a0a0;"></div>
<div class="t" style="left:1515px;width:90px;text-align:center;top:899px;font-size:11px;line-height:15px;">Отмена</div>
<div style="left:1px;top:934px;width:1617px;height:1px;background:#ffffff;"></div>
<div style="left:3px;top:937px;width:85px;height:1px;background:#a0a0a0;"></div>
<div style="left:3px;top:937px;width:1px;height:26px;background:#a0a0a0;"></div>
<div style="left:3px;top:962px;width:85px;height:1px;background:#ffffff;"></div>
<div style="left:87px;top:937px;width:1px;height:26px;background:#ffffff;"></div>
<div style="left:92px;top:937px;width:296px;height:1px;background:#a0a0a0;"></div>
<div style="left:92px;top:937px;width:1px;height:26px;background:#a0a0a0;"></div>
<div style="left:92px;top:962px;width:296px;height:1px;background:#ffffff;"></div>
<div style="left:387px;top:937px;width:1px;height:26px;background:#ffffff;"></div>
<div style="left:392px;top:937px;width:1157px;height:1px;background:#a0a0a0;"></div>
<div style="left:392px;top:937px;width:1px;height:26px;background:#a0a0a0;"></div>
<div style="left:392px;top:962px;width:1157px;height:1px;background:#ffffff;"></div>
<div style="left:1548px;top:937px;width:1px;height:26px;background:#ffffff;"></div>
<div style="left:1553px;top:937px;width:30px;height:1px;background:#a0a0a0;"></div>
<div style="left:1553px;top:937px;width:1px;height:26px;background:#a0a0a0;"></div>
<div style="left:1553px;top:962px;width:30px;height:1px;background:#ffffff;"></div>
<div style="left:1582px;top:937px;width:1px;height:26px;background:#ffffff;"></div>
<div style="left:1587px;top:937px;width:30px;height:1px;background:#a0a0a0;"></div>
<div style="left:1587px;top:937px;width:1px;height:26px;background:#a0a0a0;"></div>
<div style="left:1587px;top:962px;width:30px;height:1px;background:#ffffff;"></div>
<div style="left:1616px;top:937px;width:1px;height:26px;background:#ffffff;"></div>
<div style="left:89px;top:935px;width:1px;height:29px;background:#a0a0a0;"></div>
<div style="left:389px;top:935px;width:1px;height:29px;background:#a0a0a0;"></div>
<div style="left:1550px;top:935px;width:1px;height:29px;background:#a0a0a0;"></div>
<div style="left:1584px;top:935px;width:1px;height:29px;background:#a0a0a0;"></div>
<svg style="left:1560px;top:942px" width="16" height="16" viewBox="0 0 16 16"><circle cx="8" cy="8" r="7.5" fill="#9e9e9e"/><rect x="7" y="3" width="2" height="2" fill="#fff"/><rect x="7" y="6" width="2" height="7" fill="#fff"/><path d="M1 1l14 14" stroke="#ff0000" stroke-width="2" stroke-linecap="round"/></svg>
<div class="t" style="left:1594px;top:943px;font-size:11px;line-height:15px;color:#000;white-space:nowrap;">EN</div>
<div style="left:1px;top:131px;width:1px;height:833px;background:#e3e3e3;"></div>
<div style="left:1617px;top:151px;width:1px;height:781px;background:#a0a0a0;"></div>
<div style="left:0px;top:0px;width:1620px;height:1px;background:#787878;"></div>
<div style="left:0px;top:0px;width:1px;height:966px;background:#787878;"></div>
<div style="left:1618px;top:0px;width:1px;height:966px;background:#696969;"></div>
<div style="left:1619px;top:0px;width:1px;height:966px;background:#808080;"></div>
<div style="left:0px;top:964px;width:1620px;height:1px;background:#a0a0a0;"></div>
<div style="left:0px;top:965px;width:1620px;height:1px;background:#808080;"></div>
<svg style="left:15px;top:31px" width="16" height="16" viewBox="0 0 16 16" shape-rendering="crispEdges"><rect x="1.5" y="1.5" width="7" height="2" fill="#f5f000" stroke="#8a8a3a"/><rect x="5" y="4" width="1" height="11" fill="#2a3a6a"/><rect x="6" y="6" width="1" height="1" fill="#2a3a6a"/><rect x="7.5" y="5.5" width="6" height="2" fill="#8ab4e8" stroke="#4a6a9a"/><rect x="6" y="10" width="1" height="1" fill="#2a3a6a"/><rect x="7.5" y="9.5" width="6" height="2" fill="#8ab4e8" stroke="#4a6a9a"/><rect x="6" y="14" width="1" height="1" fill="#2a3a6a"/><rect x="7.5" y="13.5" width="6" height="2" fill="#8ab4e8" stroke="#4a6a9a"/></svg>
<svg style="left:38px;top:31px" width="16" height="16" viewBox="0 0 16 16" shape-rendering="crispEdges"><rect x="3.5" y="1.5" width="6" height="2" fill="#e8e8e8" stroke="#8a8a8a"/><rect x="7" y="4" width="1" height="11" fill="#8a8a8a"/><rect x="8" y="6" width="1" height="1" fill="#8a8a8a"/><rect x="9.5" y="5.5" width="6" height="2" fill="#e8e8e8" stroke="#8a8a8a"/><rect x="8" y="10" width="1" height="1" fill="#8a8a8a"/><rect x="9.5" y="9.5" width="6" height="2" fill="#e8e8e8" stroke="#8a8a8a"/><rect x="8" y="14" width="1" height="1" fill="#8a8a8a"/><rect x="9.5" y="13.5" width="6" height="2" fill="#e8e8e8" stroke="#8a8a8a"/><path d="M0 9h4v-2l3 3-3 3v-2H0z" fill="#7a7a7a"/></svg>
<svg style="left:67px;top:31px" width="16" height="16" viewBox="0 0 16 16"><rect x="1.5" y="1.5" width="13" height="13" fill="#fdfdfd" stroke="#7a7a7a"/><path d="M3.5 4h3l4 6.5h-3z" fill="#8a8a8a"/><path d="M12.5 4h-2.5l-6.5 6.5h2.5z" fill="#6a6a6a"/><path d="M3.5 10.5h9v1h-9z" fill="#9a9a9a"/><path d="M10 7l2.5 4h-2.5z" fill="#9a9a9a"/></svg>
<svg style="left:96px;top:30px" width="16" height="17" viewBox="0 0 16 17"><path d="M4 1h10l2 2v13H4z" fill="#fbfbfb" stroke="#bbb" stroke-width="0.6"/><rect x="0" y="3" width="14.5" height="6" fill="#8a8a8a"/><text x="1.5" y="8.3" font-size="5.6" font-weight="bold" fill="#fff" font-family="Liberation Sans" letter-spacing="0.6">PDF</text><path d="M5 16l3-5M7.5 16l3-5M10 16c1-3 3-5 5-5" stroke="#7a7a7a" stroke-width="1.3" fill="none"/></svg>
<svg style="left:124px;top:31px" width="16" height="16" viewBox="0 0 16 16"><path d="M2.5 13.5l5-5" stroke="#d8601a" stroke-width="2.6" stroke-linecap="round"/><circle cx="10.6" cy="5.9" r="4.4" fill="#a8c0f0" stroke="#f0a070" stroke-width="1.3"/><circle cx="10" cy="5" r="2" fill="#d8e4fa"/></svg>
<svg style="left:161px;top:31px" width="16" height="16" viewBox="0 0 16 16" shape-rendering="crispEdges"><path d="M1 1h12l2 2v12H1z" fill="#8a8a8a"/><rect x="4" y="1" width="7" height="5" fill="#e0e0e0"/><rect x="8" y="2" width="2" height="3" fill="#8a8a8a"/><rect x="3" y="9" width="10" height="6" fill="#e8e8e8"/></svg>
<svg style="left:184px;top:32px" width="16" height="16" viewBox="0 0 16 16"><path d="M3 9a5 5 0 0 1 8-5" fill="none" stroke="#8a8a8a" stroke-width="2"/><path d="M13 7a5 5 0 0 1-8 5" fill="none" stroke="#8a8a8a" stroke-width="2"/><path d="M10 1l4 3-4 2z" fill="#8a8a8a"/><path d="M6 15l-4-3 4-2z" fill="#8a8a8a"/></svg>
<svg style="left:207px;top:31px" width="16" height="16" viewBox="0 0 16 16"><path d="M4 8c2-3 7-3 9 2" fill="none" stroke="#8a8a8a" stroke-width="1.8"/><path d="M1 6l5 0-3 4z" fill="#8a8a8a"/></svg>
<svg style="left:237px;top:31px" width="16" height="16" viewBox="0 0 16 16"><path d="M4 6c2-4 9-4 9 3" fill="none" stroke="#2a3ae0" stroke-width="2"/><path d="M0 5l6-1-2 5z" fill="#2a3ae0"/><rect x="5.5" y="9.5" width="9" height="6" fill="#fff" stroke="#4a6aa0"/><path d="M8 11l4 3M12 11l-4 3M10 11v3" stroke="#000" stroke-width="1"/></svg>
<svg style="left:266px;top:31px" width="16" height="16" viewBox="0 0 16 16" shape-rendering="crispEdges"><rect x="1" y="4" width="10" height="4" fill="#8a8a8a"/><rect x="2" y="8" width="8" height="8" fill="#7a7a7a"/><rect x="2" y="10" width="8" height="1" fill="#c8c8c8"/><rect x="2" y="13" width="8" height="1" fill="#c8c8c8"/><rect x="2" y="5" width="6" height="2" fill="#e8e8e8"/><rect x="9" y="0" width="7" height="7" rx="1.2" fill="#8a8a8a"/><path d="M12.5 0.8L15.2 3.5L12.5 6.2L9.8 3.5z" fill="#ffffff"/><circle cx="12.5" cy="3.5" r="0.8" fill="#8a8a8a"/><rect x="10" y="1" width="1" height="1" fill="#ffffff" opacity="0.8"/><rect x="10" y="5" width="1" height="1" fill="#ffffff" opacity="0.8"/><rect x="14" y="1" width="1" height="1" fill="#ffffff" opacity="0.8"/><rect x="14" y="5" width="1" height="1" fill="#ffffff" opacity="0.8"/></svg>
<svg style="left:289px;top:31px" width="16" height="16" viewBox="0 0 16 16" shape-rendering="crispEdges"><rect x="1" y="4" width="10" height="4" fill="#8a8a8a"/><rect x="2" y="8" width="8" height="8" fill="#7a7a7a"/><rect x="2" y="10" width="8" height="1" fill="#c8c8c8"/><rect x="2" y="13" width="8" height="1" fill="#c8c8c8"/><rect x="2" y="12" width="6" height="2" fill="#e8e8e8"/><rect x="9" y="0" width="7" height="7" rx="1.2" fill="#8a8a8a"/><path d="M12.5 0.8L15.2 3.5L12.5 6.2L9.8 3.5z" fill="#ffffff"/><circle cx="12.5" cy="3.5" r="0.8" fill="#8a8a8a"/><rect x="10" y="1" width="1" height="1" fill="#ffffff" opacity="0.8"/><rect x="10" y="5" width="1" height="1" fill="#ffffff" opacity="0.8"/><rect x="14" y="1" width="1" height="1" fill="#ffffff" opacity="0.8"/><rect x="14" y="5" width="1" height="1" fill="#ffffff" opacity="0.8"/></svg>
<svg style="left:311px;top:31px" width="16" height="16" viewBox="0 0 16 16"><path d="M1.5 5.5h9v7h-4l-3 3v-3h-2z" fill="#f4f4f4" stroke="#9a9a9a"/><rect x="9" y="0" width="7" height="7" rx="1.2" fill="#8a8a8a"/><path d="M12.5 0.8L15.2 3.5L12.5 6.2L9.8 3.5z" fill="#ffffff"/><circle cx="12.5" cy="3.5" r="0.8" fill="#8a8a8a"/><rect x="10" y="1" width="1" height="1" fill="#ffffff" opacity="0.8"/><rect x="10" y="5" width="1" height="1" fill="#ffffff" opacity="0.8"/><rect x="14" y="1" width="1" height="1" fill="#ffffff" opacity="0.8"/><rect x="14" y="5" width="1" height="1" fill="#ffffff" opacity="0.8"/></svg>
<svg style="left:340px;top:33px" width="16" height="16" viewBox="0 0 16 16"><ellipse cx="7" cy="8" rx="6.5" ry="4" fill="#9a9a9a"/><rect x="5" y="0" width="5" height="3" fill="#7a7a7a"/><rect x="2" y="3" width="11" height="3" fill="#8a8a8a"/><path d="M3 8c2 2 6 2 8 0" stroke="#d8d8d8" fill="none"/><rect x="15" y="4" width="1" height="8" fill="#333"/></svg>
<svg style="left:363px;top:32px" width="16" height="16" viewBox="0 0 16 16" shape-rendering="crispEdges"><rect x="4" y="0" width="10" height="10" fill="#9a9a9a" stroke="#777"/><rect x="0" y="5" width="7" height="8" fill="#8a8a8a"/><rect x="1" y="6" width="5" height="6" fill="#aaa"/><rect x="10" y="9" width="6" height="5" fill="#8a8a8a"/><rect x="11" y="10" width="4" height="2" fill="#ddd"/></svg>
<svg style="left:528px;top:31px" width="16" height="16" viewBox="0 0 16 16"><path d="M3 3l10 10M13 3L3 13" stroke="#8a8a8a" stroke-width="1.5"/></svg>
<svg style="left:556px;top:31px" width="16" height="16" viewBox="0 0 16 16" shape-rendering="crispEdges"><rect x="3" y="1" width="10" height="12" fill="#c8c8c8" stroke="#8a8a8a"/><rect x="4" y="2" width="8" height="2" fill="#7a7a7a"/><rect x="5" y="6" width="1" height="1" fill="#f4f4f4"/><rect x="5" y="8" width="1" height="1" fill="#f4f4f4"/><rect x="5" y="10" width="1" height="1" fill="#f4f4f4"/><rect x="7" y="6" width="1" height="1" fill="#f4f4f4"/><rect x="7" y="8" width="1" height="1" fill="#f4f4f4"/><rect x="7" y="10" width="1" height="1" fill="#f4f4f4"/><rect x="9" y="6" width="1" height="1" fill="#f4f4f4"/><rect x="9" y="8" width="1" height="1" fill="#f4f4f4"/><rect x="9" y="10" width="1" height="1" fill="#f4f4f4"/><rect x="0" y="11" width="5" height="5" fill="#8a8a8a"/><rect x="1" y="12" width="3" height="1" fill="#ddd"/><rect x="11" y="9" width="5" height="7" fill="#8a8a8a"/><rect x="12" y="11" width="3" height="1" fill="#ddd"/><rect x="12" y="13" width="3" height="1" fill="#ddd"/></svg>
<svg style="left:579px;top:31px" width="16" height="16" viewBox="0 0 16 16"><path d="M0.5 4.5l4-4h8v15h-12z" fill="#f8f8f8" stroke="#8a8a8a"/><rect x="8.5" y="0.5" width="5.5" height="7" fill="#f8f8f8" stroke="#9a9a9a"/><path d="M10 3h2M10 5h2" stroke="#bbb"/><path d="M0.5 10h5M3 7.5v5" stroke="#333" stroke-width="2"/><rect x="5" y="12" width="7" height="2" fill="#7a7a7a"/></svg>
<svg style="left:602px;top:31px" width="16" height="16" viewBox="0 0 16 16"><path d="M5.5 1v7M2 4.5h7" stroke="#3a3a3a" stroke-width="2.6" stroke-linecap="round"/><rect x="2" y="11" width="8" height="3" rx="1.2" fill="#9a9a9a"/></svg>
<svg style="left:631px;top:31px" width="16" height="16" viewBox="0 0 16 16"><path d="M3 1l6 10M11 1L5 11" stroke="#8a8a8a" stroke-width="1.2"/><circle cx="4" cy="13" r="2.2" fill="none" stroke="#777" stroke-width="1.2"/><circle cx="10" cy="13" r="2.2" fill="none" stroke="#777" stroke-width="1.2"/></svg>
<svg style="left:654px;top:32px" width="16" height="16" viewBox="0 0 16 16" shape-rendering="crispEdges"><path d="M0.5 2.5l2-2h5v10h-7z" fill="#f4f4f4" stroke="#9a9a9a"/><path d="M6.5 4.5l2-2h7v11h-9z" fill="#f4f4f4" stroke="#9a9a9a"/><path d="M8 7h6M8 9h6M8 11h6" stroke="#9a9a9a"/><path d="M2 5h3M2 7h3" stroke="#bbb"/></svg>
<svg style="left:677px;top:31px" width="16" height="16" viewBox="0 0 16 16" shape-rendering="crispEdges"><rect x="0.5" y="2.5" width="15" height="12" fill="#9a9a9a" stroke="#777"/><rect x="5" y="1" width="6" height="3" fill="#bbb"/><path d="M4.5 6.5l2-2h5v11h-7z" fill="#f4f4f4" stroke="#8a8a8a"/><path d="M6 9h5M6 11h5M6 13h5" stroke="#9a9a9a"/></svg>
<svg style="left:823px;top:31px" width="16" height="16" viewBox="0 0 16 16" shape-rendering="crispEdges"><path d="M1.5 3.5l2-2h6v11h-8z" fill="#fafafa" stroke="#9a9a9a"/><path d="M6.5 5.5l2-2h7v11h-9z" fill="#fafafa" stroke="#9a9a9a"/></svg>
<svg style="left:847px;top:31px" width="16" height="16" viewBox="0 0 16 16" shape-rendering="crispEdges"><rect x="0.5" y="3.5" width="15" height="11" fill="#fdb010" stroke="#c89030"/><rect x="5" y="1" width="6" height="3" fill="#f4e070" stroke="#c89030"/><path d="M3.5 7.5l2-2h6v10h-8z" fill="#d8f4f4" stroke="#7a9a9a"/></svg>
<svg style="left:906px;top:31px" width="16" height="16" viewBox="0 0 16 16"><path d="M0.5 9.5l7-7 8 4-7 7.5z" fill="#8a8a8a"/><path d="M0.5 9.5l8 4v2.5l-8-4z" fill="#eeeeee" stroke="#aaa" stroke-width="0.5"/><path d="M8.5 13.5l7-7v2.5l-7 7z" fill="#cccccc"/><rect x="9" y="1" width="7" height="7" rx="1.2" fill="#8a8a8a"/><path d="M12.5 1.8L15.2 4.5L12.5 7.2L9.8 4.5z" fill="#ffffff"/><circle cx="12.5" cy="4.5" r="0.8" fill="#8a8a8a"/><rect x="10" y="2" width="1" height="1" fill="#ffffff" opacity="0.8"/><rect x="10" y="6" width="1" height="1" fill="#ffffff" opacity="0.8"/><rect x="14" y="2" width="1" height="1" fill="#ffffff" opacity="0.8"/><rect x="14" y="6" width="1" height="1" fill="#ffffff" opacity="0.8"/></svg>
<svg style="left:929px;top:31px" width="16" height="16" viewBox="0 0 16 16"><rect x="0.5" y="1.5" width="15" height="13" fill="#fff" stroke="#8a8a8a"/><rect x="0" y="0" width="7" height="7" rx="1.2" fill="#8a8a8a"/><path d="M3.5 0.8L6.2 3.5L3.5 6.2L0.8 3.5z" fill="#ffffff"/><circle cx="3.5" cy="3.5" r="0.8" fill="#8a8a8a"/><rect x="1" y="1" width="1" height="1" fill="#ffffff" opacity="0.8"/><rect x="1" y="5" width="1" height="1" fill="#ffffff" opacity="0.8"/><rect x="5" y="1" width="1" height="1" fill="#ffffff" opacity="0.8"/><rect x="5" y="5" width="1" height="1" fill="#ffffff" opacity="0.8"/><text x="10.5" y="14" text-anchor="end" font-size="9" fill="#000" font-family="Liberation Sans">P</text></svg>
<svg style="left:952px;top:31px" width="16" height="16" viewBox="0 0 16 16"><rect x="0.5" y="1.5" width="15" height="13" fill="#fff" stroke="#8a8a8a"/><rect x="0" y="0" width="7" height="7" rx="1.2" fill="#8a8a8a"/><path d="M3.5 0.8L6.2 3.5L3.5 6.2L0.8 3.5z" fill="#ffffff"/><circle cx="3.5" cy="3.5" r="0.8" fill="#8a8a8a"/><rect x="1" y="1" width="1" height="1" fill="#ffffff" opacity="0.8"/><rect x="1" y="5" width="1" height="1" fill="#ffffff" opacity="0.8"/><rect x="5" y="1" width="1" height="1" fill="#ffffff" opacity="0.8"/><rect x="5" y="5" width="1" height="1" fill="#ffffff" opacity="0.8"/><text x="13.5" y="14" text-anchor="end" font-size="9" fill="#000" font-family="Liberation Sans">ПР</text></svg>
<svg style="left:981px;top:31px" width="16" height="16" viewBox="0 0 16 16" shape-rendering="crispEdges"><rect x="0.5" y="2.5" width="6" height="2" fill="#f0f0f0" stroke="#8a8a8a"/><rect x="3" y="5" width="1" height="10" fill="#8a8a8a"/><rect x="4" y="7" width="1" height="1" fill="#8a8a8a"/><rect x="5.5" y="6.5" width="6" height="2" fill="#f0f0f0" stroke="#8a8a8a"/><rect x="4" y="10" width="1" height="1" fill="#8a8a8a"/><rect x="5.5" y="9.5" width="6" height="2" fill="#f0f0f0" stroke="#8a8a8a"/><rect x="4" y="14" width="1" height="1" fill="#8a8a8a"/><rect x="5.5" y="13.5" width="6" height="2" fill="#f0f0f0" stroke="#8a8a8a"/><path d="M7 8l7-7 1 1-7 7z" fill="#8a8a8a"/></svg>
<svg style="left:1004px;top:31px" width="16" height="16" viewBox="0 0 16 16" shape-rendering="crispEdges"><rect x="0.5" y="2.5" width="6" height="2" fill="#f0f0f0" stroke="#8a8a8a"/><rect x="3" y="5" width="1" height="10" fill="#8a8a8a"/><rect x="4" y="7" width="1" height="1" fill="#8a8a8a"/><rect x="5.5" y="6.5" width="6" height="2" fill="#f0f0f0" stroke="#8a8a8a"/><rect x="4" y="10" width="1" height="1" fill="#8a8a8a"/><rect x="5.5" y="9.5" width="6" height="2" fill="#f0f0f0" stroke="#8a8a8a"/><rect x="4" y="14" width="1" height="1" fill="#8a8a8a"/><rect x="5.5" y="13.5" width="6" height="2" fill="#f0f0f0" stroke="#8a8a8a"/><path d="M11 2l4 4M15 2l-4 4" stroke="#8a8a8a"/></svg>
<svg style="left:1040px;top:31px" width="16" height="16" viewBox="0 0 16 16" shape-rendering="crispEdges"><rect x="4" y="5" width="12" height="1" fill="#5a5a70"/><rect x="4" y="8" width="12" height="1" fill="#5a5a70"/><rect x="4" y="11" width="12" height="1" fill="#5a5a70"/><rect x="4" y="14" width="12" height="1" fill="#5a5a70"/><path d="M0 2h3v-2l3 3-3 3v-2H0z" fill="#0a2ad8"/></svg>
<svg style="left:1063px;top:31px" width="16" height="16" viewBox="0 0 16 16" shape-rendering="crispEdges"><rect x="4" y="5" width="12" height="1" fill="#5a5a70"/><rect x="4" y="8" width="12" height="1" fill="#5a5a70"/><rect x="4" y="11" width="12" height="1" fill="#5a5a70"/><rect x="4" y="14" width="12" height="1" fill="#5a5a70"/><path d="M3 0l3 3h-2v4h-2v-4h-2z" fill="#0a2ad8"/></svg>
<svg style="left:1086px;top:31px" width="16" height="16" viewBox="0 0 16 16" shape-rendering="crispEdges"><rect x="4" y="5" width="12" height="1" fill="#5a5a70"/><rect x="4" y="8" width="12" height="1" fill="#5a5a70"/><rect x="4" y="11" width="12" height="1" fill="#5a5a70"/><rect x="4" y="14" width="12" height="1" fill="#5a5a70"/><path d="M3 15l3-3h-2v-4h-2v4h-2z" fill="#0a2ad8"/></svg>
<svg style="left:1109px;top:31px" width="16" height="16" viewBox="0 0 16 16" shape-rendering="crispEdges"><rect x="4" y="5" width="12" height="1" fill="#5a5a70"/><rect x="4" y="8" width="12" height="1" fill="#5a5a70"/><rect x="4" y="11" width="12" height="1" fill="#5a5a70"/><rect x="4" y="14" width="12" height="1" fill="#5a5a70"/><path d="M0 11h3v-2l3 3-3 3v-2H0z" fill="#0a2ad8"/></svg>
<svg style="left:904px;top:59px" width="16" height="14" viewBox="0 0 16 14"><path d="M1 9.5l9-3.5 6 1.5v3l-9 3.5-6-1.5z" fill="#fff" stroke="#e83030" stroke-width="1"/><path d="M1 9.5l6 1.5 9-3.5" fill="none" stroke="#e83030" stroke-width="1.2"/><path d="M3 4l8-3 5 1.2-8 3.2z" fill="#e860b8"/><path d="M3 4l5 1.4v3l-5-1.4z" fill="#fff" stroke="#e860b8" stroke-width="0.6"/><path d="M8 5.4l8-3.2v3l-8 3.2z" fill="#e8eef8"/></svg>
<svg style="left:927px;top:59px" width="16" height="14" viewBox="0 0 16 14"><path d="M1 9.5l9-3.5 6 1.5v3l-9 3.5-6-1.5z" fill="#fff" stroke="#28a0f0" stroke-width="1"/><path d="M1 9.5l6 1.5 9-3.5" fill="none" stroke="#28a0f0" stroke-width="1.2"/><path d="M3 4l8-3 5 1.2-8 3.2z" fill="#2040d8"/><path d="M3 4l5 1.4v3l-5-1.4z" fill="#fff" stroke="#2040d8" stroke-width="0.6"/><path d="M8 5.4l8-3.2v3l-8 3.2z" fill="#e8eef8"/></svg>
<svg style="left:963px;top:57px" width="16" height="16" viewBox="0 0 16 16"><path d="M11 1.5a7 7 0 0 1 -6 13" fill="none" stroke="#90a8a8" stroke-width="1.6"/><path d="M1.5 14l3-3" stroke="#d08020" stroke-width="2" stroke-linecap="round"/><path d="M5 4.5l9.5 9.5" stroke="#e0a040" stroke-width="1.8"/><path d="M3 5.5l4-4 1.2 1.2-4 4z" fill="#4a5a5a"/></svg>
<svg style="left:986px;top:57px" width="16" height="16" viewBox="0 0 16 16"><path d="M0 7h10v-1.5l2-2.5v9H0z" fill="#2a80e8"/><path d="M0 7h10v2H0z" fill="#1a68d0"/><path d="M11 6h3l2 3v3h-5z" fill="#f09a20"/><rect x="12" y="7" width="2" height="2" fill="#d8f4ff"/><rect x="0" y="11" width="16" height="1" fill="#222"/><circle cx="3.5" cy="12" r="1.8" fill="#111"/><circle cx="13" cy="12" r="1.8" fill="#111"/><circle cx="3.5" cy="12" r="0.8" fill="#ffff90"/><circle cx="13" cy="12" r="0.8" fill="#ffff90"/><rect x="0" y="14" width="16" height="1" fill="#777" opacity="0.6"/></svg>
<svg style="left:1009px;top:57px" width="16" height="16" viewBox="0 0 16 16"><rect x="5" y="5" width="6" height="2.6" rx="1.3" fill="#e86a08"/><rect x="2.5" y="7.3" width="6" height="2.6" rx="1.3" fill="#e86a08"/><rect x="8" y="7.3" width="6" height="2.6" rx="1.3" fill="#e86a08"/><rect x="0" y="9.6" width="6" height="2.6" rx="1.3" fill="#e86a08"/><rect x="5.3" y="9.6" width="6" height="2.6" rx="1.3" fill="#e86a08"/><rect x="10.6" y="9.6" width="5.4" height="2.6" rx="1.3" fill="#e86a08"/><path d="M6.5 6h3M4 8.4h3M9.5 8.4h3M1.5 10.7h3M6.8 10.7h3M12 10.7h3" stroke="#f8a050" stroke-width="0.7"/></svg>
<svg style="left:1038px;top:57px" width="16" height="16" viewBox="0 0 16 16"><path d="M0 7h10v-1.5l2-2.5v9H0z" fill="#2a80e8"/><path d="M0 7h10v2H0z" fill="#1a68d0"/><path d="M11 6h3l2 3v3h-5z" fill="#f09a20"/><rect x="12" y="7" width="2" height="2" fill="#d8f4ff"/><rect x="0" y="11" width="16" height="1" fill="#222"/><circle cx="3.5" cy="12" r="1.8" fill="#111"/><circle cx="13" cy="12" r="1.8" fill="#111"/><circle cx="3.5" cy="12" r="0.8" fill="#ffff90"/><circle cx="13" cy="12" r="0.8" fill="#ffff90"/><rect x="0" y="14" width="16" height="1" fill="#777" opacity="0.6"/><path d="M1 6c2-2 5-3 8-4 1 1 1 3 0 4z" fill="#d05808"/><circle cx="6" cy="4.5" r="1" fill="#f09040"/></svg>
<svg style="left:115px;top:109px" width="16" height="15" viewBox="0 0 16 15"><path d="M0.5 2.5h5l1 1h8v11h-14z" fill="#fcd050" stroke="#9a8060"/><rect x="1" y="4" width="14" height="1" fill="#fff0a0"/><path d="M3 8.5l2.5-2.5 2.5 2.5z" fill="#222"/><path d="M5.5 8v3.5h5" stroke="#222" stroke-width="1.2" fill="none"/></svg>
<svg style="left:138px;top:109px" width="16" height="15" viewBox="0 0 16 15" shape-rendering="crispEdges"><path d="M0.5 2.5h5l1 1h8v11h-14z" fill="#90e060" stroke="#9a8080"/><rect x="6" y="8" width="4" height="1" fill="#222"/></svg>
<svg style="left:174px;top:110px" width="16" height="14" viewBox="0 0 16 14"><path d="M3 8a5 5 0 0 1 8-5" fill="none" stroke="#1a9a1a" stroke-width="2.2"/><path d="M13 6a5 5 0 0 1-8 5" fill="none" stroke="#1a9a1a" stroke-width="2.2"/><path d="M9 0l5 3-5 3z" fill="#1a9a1a"/><path d="M7 14l-5-3 5-3z" fill="#1a9a1a"/></svg>
<svg style="left:205px;top:108px" width="16" height="16" viewBox="0 0 16 16" shape-rendering="crispEdges"><rect x="0" y="8" width="5" height="8" fill="#3a78d0"/><rect x="5" y="4" width="5" height="12" fill="#3a78d0"/><rect x="11" y="9" width="5" height="7" fill="#3a78d0"/><rect x="1" y="10" width="3" height="1" fill="#c0d8f8"/><rect x="1" y="12" width="3" height="1" fill="#c0d8f8"/><rect x="1" y="14" width="3" height="1" fill="#c0d8f8"/><rect x="6" y="10" width="3" height="1" fill="#c0d8f8"/><rect x="6" y="12" width="3" height="1" fill="#c0d8f8"/><rect x="6" y="14" width="3" height="1" fill="#c0d8f8"/><rect x="12" y="10" width="3" height="1" fill="#c0d8f8"/><rect x="12" y="12" width="3" height="1" fill="#c0d8f8"/><rect x="12" y="14" width="3" height="1" fill="#c0d8f8"/><rect x="6" y="1" width="1" height="3" fill="#a00"/><rect x="7" y="1" width="2" height="1" fill="#e22"/><rect x="9" y="1" width="7" height="7" rx="1.2" fill="#f07c00"/><path d="M12.5 1.8L15.2 4.5L12.5 7.2L9.8 4.5z" fill="#ffffff"/><circle cx="12.5" cy="4.5" r="0.8" fill="#f07c00"/><rect x="10" y="2" width="1" height="1" fill="#ffffff" opacity="0.8"/><rect x="10" y="6" width="1" height="1" fill="#ffffff" opacity="0.8"/><rect x="14" y="2" width="1" height="1" fill="#ffffff" opacity="0.8"/><rect x="14" y="6" width="1" height="1" fill="#ffffff" opacity="0.8"/></svg>
<svg style="left:227px;top:108px" width="16" height="16" viewBox="0 0 16 16" shape-rendering="crispEdges"><rect x="0" y="2" width="6" height="14" fill="#3a78d0"/><rect x="1" y="4" width="4" height="1" fill="#c0d8f8"/><rect x="1" y="6" width="4" height="1" fill="#c0d8f8"/><rect x="1" y="8" width="4" height="1" fill="#c0d8f8"/><rect x="1" y="10" width="4" height="1" fill="#c0d8f8"/><rect x="1" y="12" width="4" height="1" fill="#c0d8f8"/><rect x="1" y="14" width="4" height="1" fill="#c0d8f8"/><rect x="9" y="9" width="6" height="7" fill="#9aa"/><rect x="10" y="11" width="4" height="1" fill="#ddd"/><rect x="10" y="13" width="4" height="1" fill="#ddd"/><rect x="8" y="1" width="7" height="7" rx="1.2" fill="#f07c00"/><path d="M11.5 1.8L14.2 4.5L11.5 7.2L8.8 4.5z" fill="#ffffff"/><circle cx="11.5" cy="4.5" r="0.8" fill="#f07c00"/><rect x="9" y="2" width="1" height="1" fill="#ffffff" opacity="0.8"/><rect x="9" y="6" width="1" height="1" fill="#ffffff" opacity="0.8"/><rect x="13" y="2" width="1" height="1" fill="#ffffff" opacity="0.8"/><rect x="13" y="6" width="1" height="1" fill="#ffffff" opacity="0.8"/></svg>
<svg style="left:251px;top:108px" width="16" height="16" viewBox="0 0 16 16" shape-rendering="crispEdges"><rect x="2" y="4" width="6" height="12" fill="#d0d0d0" stroke="#aaa"/><rect x="3" y="7" width="4" height="1" fill="#aaa"/><rect x="3" y="9" width="4" height="1" fill="#aaa"/><rect x="3" y="11" width="4" height="1" fill="#aaa"/><rect x="3" y="13" width="4" height="1" fill="#aaa"/><rect x="7" y="1" width="7" height="7" rx="1.2" fill="#8a8a8a"/><path d="M10.5 1.8L13.2 4.5L10.5 7.2L7.8 4.5z" fill="#ffffff"/><circle cx="10.5" cy="4.5" r="0.8" fill="#8a8a8a"/><rect x="8" y="2" width="1" height="1" fill="#ffffff" opacity="0.8"/><rect x="8" y="6" width="1" height="1" fill="#ffffff" opacity="0.8"/><rect x="12" y="2" width="1" height="1" fill="#ffffff" opacity="0.8"/><rect x="12" y="6" width="1" height="1" fill="#ffffff" opacity="0.8"/></svg>
<svg style="left:274px;top:108px" width="16" height="16" viewBox="0 0 16 16" shape-rendering="crispEdges"><rect x="0" y="1" width="3" height="15" fill="#777"/><rect x="1" y="3" width="1" height="1" fill="#fff"/><rect x="1" y="6" width="1" height="1" fill="#fff"/><rect x="1" y="9" width="1" height="1" fill="#fff"/><rect x="1" y="12" width="1" height="1" fill="#fff"/><rect x="1" y="15" width="1" height="1" fill="#fff"/><rect x="3" y="2" width="6" height="1" fill="#777"/><rect x="0" y="0" width="2" height="2" fill="#a060e0"/><path d="M3 9l6-6" stroke="#a060e0"/><rect x="3" y="9" width="12" height="2" fill="#d86010"/><rect x="7" y="12" width="2" height="2" fill="#3a90f0"/><rect x="7" y="14" width="2" height="2" fill="#3a90f0"/><rect x="10" y="12" width="2" height="2" fill="#3a90f0"/><rect x="10" y="14" width="2" height="2" fill="#3a90f0"/><rect x="13" y="12" width="2" height="2" fill="#3a90f0"/><rect x="13" y="14" width="2" height="2" fill="#3a90f0"/><rect x="9" y="0" width="7" height="7" rx="1.2" fill="#f07c00"/><path d="M12.5 0.8L15.2 3.5L12.5 6.2L9.8 3.5z" fill="#ffffff"/><circle cx="12.5" cy="3.5" r="0.8" fill="#f07c00"/><rect x="10" y="1" width="1" height="1" fill="#ffffff" opacity="0.8"/><rect x="10" y="5" width="1" height="1" fill="#ffffff" opacity="0.8"/><rect x="14" y="1" width="1" height="1" fill="#ffffff" opacity="0.8"/><rect x="14" y="5" width="1" height="1" fill="#ffffff" opacity="0.8"/></svg>
<svg style="left:296px;top:108px" width="16" height="16" viewBox="0 0 16 16" shape-rendering="crispEdges"><rect x="0" y="1" width="3" height="15" fill="#777"/><rect x="1" y="3" width="1" height="1" fill="#fff"/><rect x="1" y="6" width="1" height="1" fill="#fff"/><rect x="1" y="9" width="1" height="1" fill="#fff"/><rect x="1" y="12" width="1" height="1" fill="#fff"/><rect x="1" y="15" width="1" height="1" fill="#fff"/><rect x="3" y="2" width="6" height="1" fill="#777"/><rect x="0" y="0" width="2" height="2" fill="#a060e0"/><path d="M3 9l6-6" stroke="#a060e0"/><rect x="3" y="7" width="9" height="2" fill="#d86010"/><rect x="5" y="10" width="7" height="3" rx="1" fill="#2a88f0"/><path d="M12 11h2v3h-5v2" stroke="#222" fill="none"/><rect x="8" y="14" width="2" height="2" fill="#e00"/><rect x="13" y="9" width="2" height="2" fill="#3a90f0"/><rect x="9" y="0" width="7" height="7" rx="1.2" fill="#f07c00"/><path d="M12.5 0.8L15.2 3.5L12.5 6.2L9.8 3.5z" fill="#ffffff"/><circle cx="12.5" cy="3.5" r="0.8" fill="#f07c00"/><rect x="10" y="1" width="1" height="1" fill="#ffffff" opacity="0.8"/><rect x="10" y="5" width="1" height="1" fill="#ffffff" opacity="0.8"/><rect x="14" y="1" width="1" height="1" fill="#ffffff" opacity="0.8"/><rect x="14" y="5" width="1" height="1" fill="#ffffff" opacity="0.8"/></svg>
<svg style="left:319px;top:108px" width="16" height="16" viewBox="0 0 16 16"><path d="M0.5 9.5l7-7 8 4-7 7.5z" fill="#2a9a5a"/><path d="M0.5 9.5l8 4v2.5l-8-4z" fill="#e8ece8" stroke="#b8c0b8" stroke-width="0.5"/><path d="M8.5 13.5l7-7v2.5l-7 7z" fill="#d0d8d0"/><path d="M3 7l4-4" stroke="#60c090" stroke-width="0.8"/><rect x="9" y="1" width="7" height="7" rx="1.2" fill="#f07c00"/><path d="M12.5 1.8L15.2 4.5L12.5 7.2L9.8 4.5z" fill="#ffffff"/><circle cx="12.5" cy="4.5" r="0.8" fill="#f07c00"/><rect x="10" y="2" width="1" height="1" fill="#ffffff" opacity="0.8"/><rect x="10" y="6" width="1" height="1" fill="#ffffff" opacity="0.8"/><rect x="14" y="2" width="1" height="1" fill="#ffffff" opacity="0.8"/><rect x="14" y="6" width="1" height="1" fill="#ffffff" opacity="0.8"/></svg>
<svg style="left:342px;top:108px" width="16" height="16" viewBox="0 0 16 16"><path d="M0.5 9.5l7-7 8 4-7 7.5z" fill="#2a9a5a"/><path d="M0.5 9.5l8 4v2.5l-8-4z" fill="#e8ece8" stroke="#b8c0b8" stroke-width="0.5"/><path d="M8.5 13.5l7-7v2.5l-7 7z" fill="#d0d8d0"/><path d="M3 7l4-4" stroke="#60c090" stroke-width="0.8"/><rect x="3" y="9" width="7" height="3" rx="1" fill="#2a88f0"/><path d="M10 10h2v3h-5v2" stroke="#222" fill="none"/><rect x="6" y="14" width="2" height="2" fill="#e00"/><rect x="9" y="1" width="7" height="7" rx="1.2" fill="#f07c00"/><path d="M12.5 1.8L15.2 4.5L12.5 7.2L9.8 4.5z" fill="#ffffff"/><circle cx="12.5" cy="4.5" r="0.8" fill="#f07c00"/><rect x="10" y="2" width="1" height="1" fill="#ffffff" opacity="0.8"/><rect x="10" y="6" width="1" height="1" fill="#ffffff" opacity="0.8"/><rect x="14" y="2" width="1" height="1" fill="#ffffff" opacity="0.8"/><rect x="14" y="6" width="1" height="1" fill="#ffffff" opacity="0.8"/></svg>
<svg style="left:371px;top:108px" width="16" height="16" viewBox="0 0 16 16"><path d="M0.5 9.5l7-7 7 7" fill="none" stroke="#a05010" stroke-width="1.2"/><rect x="2" y="9" width="11" height="6" fill="#fff" stroke="#888" stroke-width="0.8"/><rect x="3" y="1" width="2" height="5" fill="#e0a040"/><rect x="0" y="15" width="15" height="1" fill="#555"/><rect x="4" y="11" width="2" height="4" fill="#f0b030"/><rect x="8" y="10" width="3" height="3" fill="#80b0f0"/><rect x="9" y="1" width="7" height="7" rx="1.2" fill="#f07c00"/><path d="M12.5 1.8L15.2 4.5L12.5 7.2L9.8 4.5z" fill="#ffffff"/><circle cx="12.5" cy="4.5" r="0.8" fill="#f07c00"/><rect x="10" y="2" width="1" height="1" fill="#ffffff" opacity="0.8"/><rect x="10" y="6" width="1" height="1" fill="#ffffff" opacity="0.8"/><rect x="14" y="2" width="1" height="1" fill="#ffffff" opacity="0.8"/><rect x="14" y="6" width="1" height="1" fill="#ffffff" opacity="0.8"/></svg>
<svg style="left:394px;top:108px" width="16" height="16" viewBox="0 0 16 16"><path d="M0.5 9.5l7-7 7 7" fill="none" stroke="#a05010" stroke-width="1.2"/><rect x="2" y="9" width="11" height="6" fill="#fff" stroke="#888" stroke-width="0.8"/><rect x="3" y="1" width="2" height="5" fill="#e0a040"/><rect x="0" y="15" width="15" height="1" fill="#555"/><rect x="3" y="9" width="7" height="3" rx="1" fill="#2a88f0"/><path d="M10 10h2v3h-5v2" stroke="#222" fill="none"/><rect x="6" y="14" width="2" height="2" fill="#e00"/><rect x="9" y="1" width="7" height="7" rx="1.2" fill="#f07c00"/><path d="M12.5 1.8L15.2 4.5L12.5 7.2L9.8 4.5z" fill="#ffffff"/><circle cx="12.5" cy="4.5" r="0.8" fill="#f07c00"/><rect x="10" y="2" width="1" height="1" fill="#ffffff" opacity="0.8"/><rect x="10" y="6" width="1" height="1" fill="#ffffff" opacity="0.8"/><rect x="14" y="2" width="1" height="1" fill="#ffffff" opacity="0.8"/><rect x="14" y="6" width="1" height="1" fill="#ffffff" opacity="0.8"/></svg>
<svg style="left:423px;top:108px" width="16" height="16" viewBox="0 0 16 16"><rect x="0.5" y="1.5" width="15" height="13" fill="#fff" stroke="#8a8a8a"/><rect x="0" y="0" width="7" height="7" rx="1.2" fill="#8a8a8a"/><path d="M3.5 0.8L6.2 3.5L3.5 6.2L0.8 3.5z" fill="#ffffff"/><circle cx="3.5" cy="3.5" r="0.8" fill="#8a8a8a"/><rect x="1" y="1" width="1" height="1" fill="#ffffff" opacity="0.8"/><rect x="1" y="5" width="1" height="1" fill="#ffffff" opacity="0.8"/><rect x="5" y="1" width="1" height="1" fill="#ffffff" opacity="0.8"/><rect x="5" y="5" width="1" height="1" fill="#ffffff" opacity="0.8"/><text x="10.5" y="14" text-anchor="end" font-size="9" fill="#000" font-family="Liberation Sans">P</text></svg>
<svg style="left:446px;top:108px" width="16" height="16" viewBox="0 0 16 16"><rect x="0.5" y="1.5" width="15" height="13" fill="#fff" stroke="#8a8a8a"/><rect x="0" y="0" width="7" height="7" rx="1.2" fill="#8a8a8a"/><path d="M3.5 0.8L6.2 3.5L3.5 6.2L0.8 3.5z" fill="#ffffff"/><circle cx="3.5" cy="3.5" r="0.8" fill="#8a8a8a"/><rect x="1" y="1" width="1" height="1" fill="#ffffff" opacity="0.8"/><rect x="1" y="5" width="1" height="1" fill="#ffffff" opacity="0.8"/><rect x="5" y="1" width="1" height="1" fill="#ffffff" opacity="0.8"/><rect x="5" y="5" width="1" height="1" fill="#ffffff" opacity="0.8"/><text x="13.5" y="14" text-anchor="end" font-size="9" fill="#000" font-family="Liberation Sans">ПР</text></svg>
<svg style="left:472px;top:110px" width="10" height="12" viewBox="0 0 10 12" shape-rendering="crispEdges"><path d="M5 0l5 5H7v7H3V5H0z" fill="#8a8a8a"/></svg>
<svg style="left:495px;top:110px" width="10" height="12" viewBox="0 0 10 12" shape-rendering="crispEdges"><path d="M5 12l5-5H7V0H3v7H0z" fill="#8a8a8a"/></svg>
<svg style="left:521px;top:108px" width="16" height="16" viewBox="0 0 16 16"><path d="M3 6l5-5 5 5" fill="none" stroke="#a03010" stroke-width="1.3"/><rect x="5" y="5" width="6" height="5" fill="#fff"/><rect x="8" y="6" width="2" height="2" fill="#80b0f0"/><path d="M0 12l3-3 3 3M9 12l3-3 3 3" fill="none" stroke="#a03010" stroke-width="1.2"/><rect x="1" y="12" width="4" height="4" fill="#fff" stroke="#888" stroke-width="0.6"/><rect x="10" y="12" width="4" height="4" fill="#fff" stroke="#888" stroke-width="0.6"/><rect x="2" y="13" width="1" height="3" fill="#e0a040"/><rect x="11" y="13" width="1" height="3" fill="#e0a040"/></svg>
<svg style="left:544px;top:108px" width="16" height="16" viewBox="0 0 16 16" shape-rendering="crispEdges"><rect x="0" y="2" width="13" height="13" fill="#aaa"/><rect x="13" y="9" width="2" height="5" fill="#aaa"/><text x="3" y="8" font-size="6" fill="#eee" font-family="Liberation Mono">01</text><text x="4" y="14" font-size="6" fill="#eee" font-family="Liberation Mono">10</text><rect x="9" y="0" width="7" height="7" rx="1.2" fill="#8a8a8a"/><path d="M12.5 0.8L15.2 3.5L12.5 6.2L9.8 3.5z" fill="#ffffff"/><circle cx="12.5" cy="3.5" r="0.8" fill="#8a8a8a"/><rect x="10" y="1" width="1" height="1" fill="#ffffff" opacity="0.8"/><rect x="10" y="5" width="1" height="1" fill="#ffffff" opacity="0.8"/><rect x="14" y="1" width="1" height="1" fill="#ffffff" opacity="0.8"/><rect x="14" y="5" width="1" height="1" fill="#ffffff" opacity="0.8"/></svg>
<svg style="left:573px;top:108px" width="16" height="16" viewBox="0 0 16 16" shape-rendering="crispEdges"><rect x="0.5" y="1.5" width="15" height="13" fill="#c8c8c8" stroke="#9a9a9a"/><text x="1" y="13" font-size="9" fill="#555" font-family="Liberation Sans" letter-spacing="-0.5">%</text><rect x="9" y="0" width="7" height="7" rx="1.2" fill="#8a8a8a"/><path d="M12.5 0.8L15.2 3.5L12.5 6.2L9.8 3.5z" fill="#ffffff"/><circle cx="12.5" cy="3.5" r="0.8" fill="#8a8a8a"/><rect x="10" y="1" width="1" height="1" fill="#ffffff" opacity="0.8"/><rect x="10" y="5" width="1" height="1" fill="#ffffff" opacity="0.8"/><rect x="14" y="1" width="1" height="1" fill="#ffffff" opacity="0.8"/><rect x="14" y="5" width="1" height="1" fill="#ffffff" opacity="0.8"/></svg>
<svg style="left:596px;top:108px" width="16" height="16" viewBox="0 0 16 16" shape-rendering="crispEdges"><rect x="0.5" y="1.5" width="15" height="13" fill="#c8c8c8" stroke="#9a9a9a"/><text x="1" y="13" font-size="9" fill="#555" font-family="Liberation Sans" letter-spacing="-0.5">м2</text><rect x="9" y="0" width="7" height="7" rx="1.2" fill="#8a8a8a"/><path d="M12.5 0.8L15.2 3.5L12.5 6.2L9.8 3.5z" fill="#ffffff"/><circle cx="12.5" cy="3.5" r="0.8" fill="#8a8a8a"/><rect x="10" y="1" width="1" height="1" fill="#ffffff" opacity="0.8"/><rect x="10" y="5" width="1" height="1" fill="#ffffff" opacity="0.8"/><rect x="14" y="1" width="1" height="1" fill="#ffffff" opacity="0.8"/><rect x="14" y="5" width="1" height="1" fill="#ffffff" opacity="0.8"/></svg>
<svg style="left:619px;top:108px" width="16" height="16" viewBox="0 0 16 16" shape-rendering="crispEdges"><rect x="0.5" y="1.5" width="15" height="13" fill="#c8c8c8" stroke="#9a9a9a"/><text x="1" y="13" font-size="9" fill="#555" font-family="Liberation Sans" letter-spacing="-0.5">РР</text><rect x="9" y="0" width="7" height="7" rx="1.2" fill="#8a8a8a"/><path d="M12.5 0.8L15.2 3.5L12.5 6.2L9.8 3.5z" fill="#ffffff"/><circle cx="12.5" cy="3.5" r="0.8" fill="#8a8a8a"/><rect x="10" y="1" width="1" height="1" fill="#ffffff" opacity="0.8"/><rect x="10" y="5" width="1" height="1" fill="#ffffff" opacity="0.8"/><rect x="14" y="1" width="1" height="1" fill="#ffffff" opacity="0.8"/><rect x="14" y="5" width="1" height="1" fill="#ffffff" opacity="0.8"/></svg>
<svg style="left:642px;top:108px" width="16" height="16" viewBox="0 0 16 16" shape-rendering="crispEdges"><rect x="0.5" y="1.5" width="15" height="13" fill="#c8c8c8" stroke="#9a9a9a"/><text x="1" y="13" font-size="9" fill="#555" font-family="Liberation Sans" letter-spacing="-0.5">ФЗ</text><rect x="9" y="0" width="7" height="7" rx="1.2" fill="#8a8a8a"/><path d="M12.5 0.8L15.2 3.5L12.5 6.2L9.8 3.5z" fill="#ffffff"/><circle cx="12.5" cy="3.5" r="0.8" fill="#8a8a8a"/><rect x="10" y="1" width="1" height="1" fill="#ffffff" opacity="0.8"/><rect x="10" y="5" width="1" height="1" fill="#ffffff" opacity="0.8"/><rect x="14" y="1" width="1" height="1" fill="#ffffff" opacity="0.8"/><rect x="14" y="5" width="1" height="1" fill="#ffffff" opacity="0.8"/></svg>
<svg style="left:671px;top:108px" width="16" height="16" viewBox="0 0 16 16" shape-rendering="crispEdges"><path d="M0.5 3.5h6l1 1h8v10h-15z" fill="#f8e040" stroke="#8a7a60"/><rect x="1" y="7" width="14" height="4" fill="#ffd000"/><rect x="9" y="1" width="7" height="7" rx="1.2" fill="#f07c00"/><path d="M12.5 1.8L15.2 4.5L12.5 7.2L9.8 4.5z" fill="#ffffff"/><circle cx="12.5" cy="4.5" r="0.8" fill="#f07c00"/><rect x="10" y="2" width="1" height="1" fill="#ffffff" opacity="0.8"/><rect x="10" y="6" width="1" height="1" fill="#ffffff" opacity="0.8"/><rect x="14" y="2" width="1" height="1" fill="#ffffff" opacity="0.8"/><rect x="14" y="6" width="1" height="1" fill="#ffffff" opacity="0.8"/></svg>
<svg style="left:702px;top:110px" width="11" height="11" viewBox="0 0 11 11"><path d="M1 1l9 9M10 1l-9 9" stroke="#f04018" stroke-width="1.6"/></svg>
<svg style="left:24px;top:159px" width="16" height="13" viewBox="0 0 16 13"><path d="M6 0l6 12H0z" fill="#2a6ad0"/><rect x="8" y="5" width="7" height="6" fill="#7ac040"/><circle cx="7" cy="8" r="3.5" fill="#e82010"/></svg>
<svg style="left:44px;top:173px" width="16" height="16" viewBox="0 0 16 16" shape-rendering="crispEdges"><rect x="0" y="6" width="4" height="10" fill="#3a78d0"/><rect x="5" y="3" width="5" height="13" fill="#3a78d0"/><rect x="11" y="7" width="4" height="9" fill="#3a78d0"/><rect x="1" y="8" width="2" height="1" fill="#c0d8f8"/><rect x="1" y="10" width="2" height="1" fill="#c0d8f8"/><rect x="1" y="12" width="2" height="1" fill="#c0d8f8"/><rect x="1" y="14" width="2" height="1" fill="#c0d8f8"/><rect x="6" y="8" width="3" height="1" fill="#c0d8f8"/><rect x="6" y="10" width="3" height="1" fill="#c0d8f8"/><rect x="6" y="12" width="3" height="1" fill="#c0d8f8"/><rect x="6" y="14" width="3" height="1" fill="#c0d8f8"/><rect x="12" y="8" width="2" height="1" fill="#c0d8f8"/><rect x="12" y="10" width="2" height="1" fill="#c0d8f8"/><rect x="12" y="12" width="2" height="1" fill="#c0d8f8"/><rect x="12" y="14" width="2" height="1" fill="#c0d8f8"/><rect x="6" y="0" width="1" height="3" fill="#555"/><path d="M7 0h3l-3 2z" fill="#e22"/></svg>
<svg style="left:44px;top:190px" width="16" height="15" viewBox="0 0 16 15" shape-rendering="crispEdges"><path d="M0.5 1.5h6l1 1h7v11h-14z" fill="#f8c000" stroke="#8a7a60"/><path d="M1 4h13v9H1z" fill="url(#gf)"/><defs><linearGradient id="gf" x1="0" y1="1" x2="1" y2="0"><stop offset="0.3" stop-color="#ffe000"/><stop offset="1" stop-color="#f07000"/></linearGradient></defs></svg>
<svg style="left:43px;top:206px" width="16" height="15" viewBox="0 0 16 15"><path d="M3.5 0.5h5l1 1h4v9h-10z" fill="#fce080" stroke="#9a8a60"/><path d="M0 9c2-1 4-1 6 1h6c2 0 3 1 2 2-3 3-8 3-11 1-1-1-3-2-3-4z" fill="#f0a050"/><path d="M4 11h7" stroke="#c07030"/><rect x="15" y="8" width="1" height="6" fill="#333"/></svg>
<svg style="left:45px;top:222px" width="13" height="16" viewBox="0 0 13 16"><circle cx="6" cy="3" r="3" fill="#dde" stroke="#aab"/><rect x="3" y="5" width="7" height="11" fill="#7a8a9a"/><path d="M3 8h7M3 11h7M3 14h7" stroke="#bcc"/><rect x="1" y="6" width="11" height="1" fill="#556"/></svg>
</body></html>
